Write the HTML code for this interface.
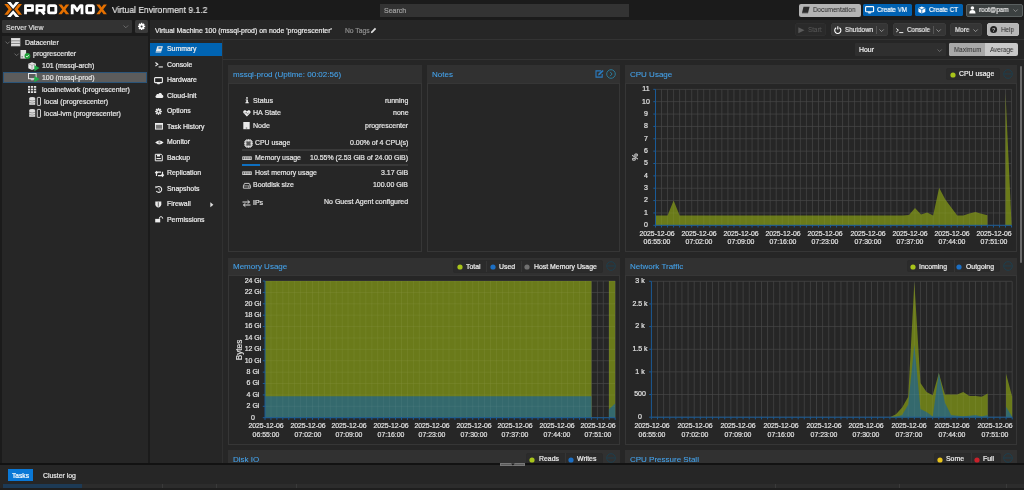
<!DOCTYPE html>
<html><head><meta charset="utf-8"><style>
html,body{margin:0;padding:0;}
body{width:1024px;height:490px;overflow:hidden;position:relative;background:#1b1b1b;font-family:'Liberation Sans', sans-serif;}
.t{position:absolute;white-space:nowrap;line-height:1;-webkit-text-stroke:0.2px currentColor;will-change:transform;}
.r{position:absolute;box-sizing:border-box;}
svg.r{overflow:visible;}
</style></head><body>
<div class="r" style="left:0px;top:0px;width:1024px;height:20px;background:#1b1b1b;"></div>
<div class="r" style="left:2px;top:36px;width:146px;height:427px;background:#262626;"></div>
<div class="r" style="left:2px;top:20px;width:130px;height:13px;background:#333333;border-radius:1px;"></div>
<div class="r" style="left:135px;top:20px;width:13px;height:13px;background:#3a3a3a;border-radius:1.5px;"></div>
<div class="r" style="left:150px;top:20px;width:874px;height:19px;background:#262626;"></div>
<div class="r" style="left:150px;top:39px;width:874px;height:1px;background:#333333;"></div>
<div class="r" style="left:150px;top:40px;width:72px;height:423px;background:#262626;"></div>
<div class="r" style="left:222px;top:40px;width:1px;height:423px;background:#303030;"></div>
<div class="r" style="left:223px;top:40px;width:801px;height:19px;background:#262626;"></div>
<div class="r" style="left:223px;top:59px;width:801px;height:1px;background:#333333;"></div>
<div class="r" style="left:223px;top:60px;width:801px;height:403px;background:#262626;"></div>
<svg class="r" style="left:0px;top:0px;" width="110" height="20" viewBox="0 0 110 20"><polygon points="4.3,3.9 7.8,3.9 12,9.3 7.8,14.7 4.3,14.7 8.5,9.3" fill="#e57000"/><polygon points="22,3.9 18.5,3.9 14.3,9.3 18.5,14.7 22,14.7 17.8,9.3" fill="#e57000"/><polygon points="7,2.0 10.7,2.0 13.15,5.2 15.6,2.0 19.3,2.0 13.15,8.9" fill="#fff"/><polygon points="7,17.1 10.7,17.1 13.15,13.9 15.6,17.1 19.3,17.1 13.15,10.2" fill="#fff"/><path d="M25.5 14.3 V5.55 H32.5 V10.4 H25.5" fill="none" stroke="#fff" stroke-width="2.8" stroke-linejoin="round"/><path d="M36.9 14.3 V5.55 H44.0 V10.4 H36.9 M41.2 10.5 L44.5 14.3" fill="none" stroke="#fff" stroke-width="2.8" stroke-linejoin="round"/><rect x="48.6" y="5.55" width="7.2" height="7.35" rx="1.1" fill="none" stroke="#fff" stroke-width="2.8"/><polygon points="58.4,4.4 61.699999999999996,4.4 69.2,14.2 65.9,14.2" fill="#e57000"/><polygon points="65.9,4.4 69.2,4.4 61.699999999999996,14.2 58.4,14.2" fill="#e57000"/><path d="M72.2 14.3 V5.55 H73.8 L77.1 10.6 L80.4 5.55 H82.0 V14.3" fill="none" stroke="#fff" stroke-width="2.8" stroke-linejoin="round"/><rect x="86.7" y="5.55" width="6.7" height="7.35" rx="1.1" fill="none" stroke="#fff" stroke-width="2.8"/><polygon points="96.3,4.4 99.6,4.4 106.9,14.2 103.60000000000001,14.2" fill="#e57000"/><polygon points="103.60000000000001,4.4 106.9,4.4 99.6,14.2 96.3,14.2" fill="#e57000"/></svg>
<div class="t" style="left:111.60px;top:6px;font-size:9.2px;color:#e4e4e4;font-weight:normal;transform:scaleX(0.925);transform-origin:0 0;">Virtual Environment 9.1.2</div>
<div class="r" style="left:380px;top:4px;width:249px;height:13px;background:#333333;"></div>
<div class="t" style="left:383.70px;top:7px;font-size:7.0px;color:#a0a0a0;font-weight:normal;">Search</div>
<div class="r" style="left:799px;top:3.5px;width:62px;height:13.3px;background:#b4b4b4;border-radius:2px;"></div>
<svg class="r" style="left:801px;top:6px;" width="10" height="8" viewBox="0 0 10 8"><path d="M2.5 0.8 H8.6 L7.2 6.2 H1.1 Z" fill="#2a2a2a"/><path d="M1.1 6.2 H7.2 L7 7.2 H1 Z" fill="#2a2a2a"/></svg>
<div class="t" style="left:812.70px;top:6px;font-size:7.0px;color:#262626;font-weight:normal;transform:scaleX(0.9);transform-origin:0 0;-webkit-text-stroke:0;">Documentation</div>
<div class="r" style="left:863px;top:3.8px;width:48.60000000000002px;height:12.599999999999998px;background:#0062b3;border-radius:1.5px;"></div>
<svg class="r" style="left:865px;top:6px;" width="10" height="8" viewBox="0 0 10 8"><rect x="0.6" y="0.6" width="8" height="5.2" rx="0.8" fill="none" stroke="#fff" stroke-width="1.1"/><path d="M2.5 6.3 H6.7 L5.6 7.4 H3.6 Z" fill="#fff"/></svg>
<div class="t" style="left:876.60px;top:6px;font-size:7.0px;color:#ffffff;font-weight:normal;transform:scaleX(0.9);transform-origin:0 0;">Create VM</div>
<div class="r" style="left:915px;top:3.8px;width:47.60000000000002px;height:12.599999999999998px;background:#0062b3;border-radius:1.5px;"></div>
<svg class="r" style="left:917.5px;top:6.2px;" width="8" height="8" viewBox="0 0 8 8"><path d="M3.8 0.4 L7.3 1.9 V5.9 L3.8 7.5 L0.4 5.9 V1.9 Z" fill="#fff"/><path d="M0.6 2.1 L3.8 3.5 L7.1 2.1 M3.8 3.5 V7.2" fill="none" stroke="#0062b3" stroke-width="0.8"/></svg>
<div class="t" style="left:928.60px;top:6px;font-size:7.0px;color:#ffffff;font-weight:normal;transform:scaleX(0.9);transform-origin:0 0;">Create CT</div>
<div class="r" style="left:965.8px;top:3.5px;width:56.90000000000009px;height:13.3px;background:#3c4141;border:1px solid #5a6060;border-radius:2px;"></div>
<svg class="r" style="left:969px;top:6px;" width="7" height="8" viewBox="0 0 7 8"><circle cx="3.4" cy="2" r="1.8" fill="#fff"/><path d="M0.3 7.6 C0.3 4.6 1.5 4 3.4 4 C5.3 4 6.5 4.6 6.5 7.6 Z" fill="#fff"/></svg>
<div class="t" style="left:978.90px;top:6px;font-size:7.0px;color:#e8e8e8;font-weight:normal;transform:scaleX(0.9);transform-origin:0 0;">root@pam</div>
<svg class="r" style="left:1013px;top:8.5px;" width="6" height="4" viewBox="0 0 6 4"><polyline points="0.5,0.5 2.6,2.6 4.7,0.5" fill="none" stroke="#999" stroke-width="0.8"/></svg>
<div class="t" style="left:5.60px;top:24px;font-size:6.98px;color:#dcdcdc;font-weight:normal;">Server View</div>
<svg class="r" style="left:122.5px;top:25px;" width="6" height="4" viewBox="0 0 6 4"><polyline points="0.5,0.5 2.8,2.8 5.1,0.5" fill="none" stroke="#777" stroke-width="0.8"/></svg>
<svg class="r" style="left:136px;top:21px;" width="11" height="11" viewBox="0 0 11 11"><g transform="translate(5.6,5.4)"><circle r="2.6" fill="#fff"/><rect x="-0.8" y="-3.6" width="1.6" height="1.6" fill="#fff" transform="rotate(0)"/><rect x="-0.8" y="-3.6" width="1.6" height="1.6" fill="#fff" transform="rotate(45)"/><rect x="-0.8" y="-3.6" width="1.6" height="1.6" fill="#fff" transform="rotate(90)"/><rect x="-0.8" y="-3.6" width="1.6" height="1.6" fill="#fff" transform="rotate(135)"/><rect x="-0.8" y="-3.6" width="1.6" height="1.6" fill="#fff" transform="rotate(180)"/><rect x="-0.8" y="-3.6" width="1.6" height="1.6" fill="#fff" transform="rotate(225)"/><rect x="-0.8" y="-3.6" width="1.6" height="1.6" fill="#fff" transform="rotate(270)"/><rect x="-0.8" y="-3.6" width="1.6" height="1.6" fill="#fff" transform="rotate(315)"/><circle r="1.0" fill="#3a3a3a"/></g></svg>
<svg class="r" style="left:4.6px;top:40.6px;" width="6" height="4" viewBox="0 0 6 4"><polyline points="0.5,0.6 2.6,2.7 4.7,0.6" fill="none" stroke="#7a7a7a" stroke-width="0.8"/></svg>
<svg class="r" style="left:10.7px;top:38.4px;" width="9.5" height="8.5" viewBox="0 0 9.5 8.5"><rect x="0" y="0" width="9.3" height="8.3" fill="#cfcfcf"/><rect x="0" y="2.6" width="9.3" height="0.7" fill="#6a6a6a"/><rect x="0" y="5.3" width="9.3" height="0.7" fill="#6a6a6a"/><rect x="1" y="0.9" width="7.3" height="0.6" fill="#f4f4f4"/><rect x="1" y="3.7" width="7.3" height="0.6" fill="#f4f4f4"/><rect x="1" y="6.5" width="7.3" height="0.6" fill="#f4f4f4"/></svg>
<div class="t" style="left:24.90px;top:40px;font-size:6.9px;color:#e6e6e6;font-weight:normal;">Datacenter</div>
<svg class="r" style="left:14.0px;top:52.6px;" width="6" height="4" viewBox="0 0 6 4"><polyline points="0.5,0.6 2.6,2.7 4.7,0.6" fill="none" stroke="#7a7a7a" stroke-width="0.8"/></svg>
<svg class="r" style="left:19.8px;top:50px;" width="11" height="9" viewBox="0 0 11 9"><rect x="0.5" y="0" width="5.6" height="8.6" fill="#e0e0e0"/><rect x="1.5" y="6.4" width="1.4" height="0.9" fill="#555"/><circle cx="7.4" cy="6" r="2.9" fill="#22a03a"/><polyline points="6,6 7.1,7.1 8.9,4.9" fill="none" stroke="#fff" stroke-width="0.8"/></svg>
<div class="t" style="left:32.60px;top:50px;font-size:7.0px;color:#e6e6e6;font-weight:normal;">progrescenter</div>
<svg class="r" style="left:28px;top:61.5px;" width="12" height="9" viewBox="0 0 12 9"><path d="M4 0.3 L8 1.7 V6.3 L4 7.9 L0.3 6.3 V1.7 Z" fill="#e8e8e8"/><path d="M0.5 1.9 L4 3.3 L7.8 1.9 M4 3.3 V7.6" fill="none" stroke="#888" stroke-width="0.6"/><path d="M6.3 3.0 L11.6 6.1 L6.3 9.2 Z" fill="#22b04a"/></svg>
<div class="t" style="left:41.90px;top:63px;font-size:6.97px;color:#e6e6e6;font-weight:normal;">101 (mssql-arch)</div>
<div class="r" style="left:2.6px;top:71.9px;width:144.4px;height:11.5px;background:#5c5c5c;border:1px solid #2b5478;"></div>
<svg class="r" style="left:28px;top:73.4px;" width="12" height="9" viewBox="0 0 12 9"><rect x="0.5" y="0.5" width="7.6" height="5.2" fill="none" stroke="#e8e8e8" stroke-width="1"/><path d="M2.4 6.2 H6.2 L5.4 7.3 H3.2 Z" fill="#e8e8e8"/><path d="M6.3 3.0 L11.6 6.1 L6.3 9.2 Z" fill="#22b04a"/></svg>
<div class="t" style="left:41.90px;top:75px;font-size:6.96px;color:#e6e6e6;font-weight:normal;">100 (mssql-prod)</div>
<svg class="r" style="left:27.8px;top:85.5px;" width="9" height="8" viewBox="0 0 9 8"><rect x="0" y="0" width="2.2" height="1.8" fill="#e0e0e0"/><rect x="0" y="2.6" width="2.2" height="1.8" fill="#e0e0e0"/><rect x="0" y="5.2" width="2.2" height="1.8" fill="#e0e0e0"/><rect x="3" y="0" width="2.2" height="1.8" fill="#e0e0e0"/><rect x="3" y="2.6" width="2.2" height="1.8" fill="#e0e0e0"/><rect x="3" y="5.2" width="2.2" height="1.8" fill="#e0e0e0"/><rect x="6" y="0" width="2.2" height="1.8" fill="#e0e0e0"/><rect x="6" y="2.6" width="2.2" height="1.8" fill="#e0e0e0"/><rect x="6" y="5.2" width="2.2" height="1.8" fill="#e0e0e0"/></svg>
<div class="t" style="left:41.90px;top:87px;font-size:6.94px;color:#e6e6e6;font-weight:normal;">localnetwork (progrescenter)</div>
<svg class="r" style="left:28.5px;top:97.3px;" width="14" height="9" viewBox="0 0 14 9"><ellipse cx="3.2" cy="1.2" rx="3" ry="1.1" fill="#ddd"/><rect x="0.2" y="1.2" width="6" height="6.6" fill="#ddd"/><path d="M0.2 3.3 Q3.2 4.6 6.2 3.3 M0.2 5.5 Q3.2 6.8 6.2 5.5" fill="none" stroke="#666" stroke-width="0.6"/><rect x="8.3" y="0.4" width="3.2" height="8" rx="0.5" fill="none" stroke="#ddd" stroke-width="0.9"/></svg>
<div class="t" style="left:44.00px;top:98px;font-size:7.0px;color:#e6e6e6;font-weight:normal;">local (progrescenter)</div>
<svg class="r" style="left:28.5px;top:109.3px;" width="14" height="9" viewBox="0 0 14 9"><ellipse cx="3.2" cy="1.2" rx="3" ry="1.1" fill="#ddd"/><rect x="0.2" y="1.2" width="6" height="6.6" fill="#ddd"/><path d="M0.2 3.3 Q3.2 4.6 6.2 3.3 M0.2 5.5 Q3.2 6.8 6.2 5.5" fill="none" stroke="#666" stroke-width="0.6"/><rect x="8.3" y="0.4" width="3.2" height="8" rx="0.5" fill="none" stroke="#ddd" stroke-width="0.9"/></svg>
<div class="t" style="left:44.00px;top:111px;font-size:6.96px;color:#e6e6e6;font-weight:normal;">local-lvm (progrescenter)</div>
<div class="t" style="left:154.60px;top:28px;font-size:6.96px;color:#e8e8e8;font-weight:normal;">Virtual Machine 100 (mssql-prod) on node 'progrescenter'</div>
<div class="t" style="left:344.50px;top:28px;font-size:6.74px;color:#8f8f8f;font-weight:normal;">No Tags</div>
<svg class="r" style="left:370px;top:26.5px;" width="7" height="7" viewBox="0 0 7 7"><path d="M0.8 6.2 L1.3 4.4 L4.9 0.8 L6.2 2.1 L2.6 5.7 Z" fill="#ddd"/></svg>
<div class="r" style="left:794.8px;top:23.2px;width:31.200000000000045px;height:13.000000000000004px;background:#2a2a2a;border:1px solid #2e2e2e;border-radius:2px;"></div>
<svg class="r" style="left:797.7px;top:27px;" width="7" height="7" viewBox="0 0 7 7"><path d="M0.3 0.2 L6.5 3.2 L0.3 6.3 Z" fill="#5a5a5a"/></svg>
<div class="t" style="left:808.00px;top:26px;font-size:7.0px;color:#5c5c5c;font-weight:normal;transform:scaleX(0.9);transform-origin:0 0;-webkit-text-stroke:0;">Start</div>
<div class="r" style="left:830.8px;top:23.2px;width:57.200000000000045px;height:13.000000000000004px;background:#353535;border:1px solid #3a3a3a;border-radius:2px;"></div>
<svg class="r" style="left:833.5px;top:25.8px;" width="8" height="8" viewBox="0 0 8 8"><path d="M2.2 1.8 A3.1 3.1 0 1 0 5.4 1.8" fill="none" stroke="#fff" stroke-width="1.1"/><line x1="3.8" y1="0.3" x2="3.8" y2="3.6" stroke="#fff" stroke-width="1.1"/></svg>
<div class="t" style="left:844.60px;top:26px;font-size:7.0px;color:#e8e8e8;font-weight:normal;transform:scaleX(0.9);transform-origin:0 0;">Shutdown</div>
<div class="r" style="left:875.5px;top:25.9px;width:0.7999999999999545px;height:8.100000000000001px;background:#555;"></div>
<svg class="r" style="left:879px;top:29px;" width="6" height="4" viewBox="0 0 6 4"><polyline points="0.5,0.5 2.6,2.6 4.7,0.5" fill="none" stroke="#aaa" stroke-width="0.8"/></svg>
<div class="r" style="left:892.9px;top:23.2px;width:52.700000000000045px;height:13.000000000000004px;background:#353535;border:1px solid #3a3a3a;border-radius:2px;"></div>
<svg class="r" style="left:895.8px;top:27.5px;" width="8" height="6" viewBox="0 0 8 6"><polyline points="0.3,0.5 2.4,2.2 0.3,3.9" fill="none" stroke="#fff" stroke-width="0.9"/><line x1="3.2" y1="4.6" x2="7.3" y2="4.6" stroke="#fff" stroke-width="0.9"/></svg>
<div class="t" style="left:906.80px;top:26px;font-size:7.0px;color:#e8e8e8;font-weight:normal;transform:scaleX(0.9);transform-origin:0 0;">Console</div>
<div class="r" style="left:932.5px;top:25.9px;width:0.7999999999999545px;height:8.100000000000001px;background:#555;"></div>
<svg class="r" style="left:936.4px;top:29px;" width="6" height="4" viewBox="0 0 6 4"><polyline points="0.5,0.5 2.6,2.6 4.7,0.5" fill="none" stroke="#aaa" stroke-width="0.8"/></svg>
<div class="r" style="left:950px;top:23.2px;width:32.299999999999955px;height:13.000000000000004px;background:#353535;border:1px solid #3a3a3a;border-radius:2px;"></div>
<div class="t" style="left:954.80px;top:26px;font-size:7.0px;color:#e8e8e8;font-weight:normal;transform:scaleX(0.9);transform-origin:0 0;">More</div>
<svg class="r" style="left:973.4px;top:29px;" width="6" height="4" viewBox="0 0 6 4"><polyline points="0.5,0.5 2.6,2.6 4.7,0.5" fill="none" stroke="#aaa" stroke-width="0.8"/></svg>
<div class="r" style="left:986.9px;top:23.2px;width:32.0px;height:13.000000000000004px;background:#b7b7b7;border:1px solid #bdbdbd;border-radius:2px;"></div>
<svg class="r" style="left:990px;top:26px;" width="8" height="8" viewBox="0 0 8 8"><circle cx="3.6" cy="3.6" r="3.5" fill="#222"/><text x="3.6" y="5.7" font-size="5.6" font-weight="bold" text-anchor="middle" fill="#b7b7b7" font-family="Liberation Sans">?</text></svg>
<div class="t" style="left:1001.00px;top:26px;font-size:7.0px;color:#2a2a2a;font-weight:normal;transform:scaleX(0.9);transform-origin:0 0;-webkit-text-stroke:0;">Help</div>
<div class="r" style="left:855.3px;top:43px;width:90.70000000000005px;height:13px;background:#2f2f2f;border-radius:1px;"></div>
<div class="t" style="left:858.90px;top:47px;font-size:6.9px;color:#f0f0f0;font-weight:normal;">Hour</div>
<svg class="r" style="left:937px;top:48.5px;" width="6" height="4" viewBox="0 0 6 4"><polyline points="0.5,0.5 2.6,2.6 4.7,0.5" fill="none" stroke="#777" stroke-width="0.8"/></svg>
<div class="r" style="left:948.7px;top:43px;width:69.29999999999995px;height:13px;background:#c9c9c9;border-radius:2px;"></div>
<div class="r" style="left:948.7px;top:43px;width:36.299999999999955px;height:13px;background:#a8a8a8;border-radius:2px 0 0 2px;"></div>
<div class="t" style="left:953.60px;top:46px;font-size:7.0px;color:#2a2a2a;font-weight:normal;transform:scaleX(0.9);transform-origin:0 0;-webkit-text-stroke:0;">Maximum</div>
<div class="t" style="left:990.00px;top:46px;font-size:7.0px;color:#2a2a2a;font-weight:normal;transform:scaleX(0.9);transform-origin:0 0;-webkit-text-stroke:0;">Average</div>
<div class="r" style="left:150px;top:42.8px;width:72px;height:12.800000000000004px;background:#0063b1;"></div>
<div class="t" style="left:166.90px;top:46px;font-size:6.9px;color:#eeeeee;font-weight:normal;">Summary</div>
<div class="t" style="left:166.90px;top:62px;font-size:6.9px;color:#eeeeee;font-weight:normal;">Console</div>
<div class="t" style="left:166.90px;top:77px;font-size:6.9px;color:#eeeeee;font-weight:normal;">Hardware</div>
<div class="t" style="left:166.90px;top:93px;font-size:6.9px;color:#eeeeee;font-weight:normal;">Cloud-Init</div>
<div class="t" style="left:166.90px;top:108px;font-size:6.9px;color:#eeeeee;font-weight:normal;">Options</div>
<div class="t" style="left:166.90px;top:124px;font-size:6.9px;color:#eeeeee;font-weight:normal;">Task History</div>
<div class="t" style="left:166.90px;top:139px;font-size:6.9px;color:#eeeeee;font-weight:normal;">Monitor</div>
<div class="t" style="left:166.90px;top:155px;font-size:6.9px;color:#eeeeee;font-weight:normal;">Backup</div>
<div class="t" style="left:166.90px;top:170px;font-size:6.9px;color:#eeeeee;font-weight:normal;">Replication</div>
<div class="t" style="left:166.90px;top:186px;font-size:6.9px;color:#eeeeee;font-weight:normal;">Snapshots</div>
<div class="t" style="left:166.90px;top:201px;font-size:6.9px;color:#eeeeee;font-weight:normal;">Firewall</div>
<div class="t" style="left:166.90px;top:217px;font-size:6.9px;color:#eeeeee;font-weight:normal;">Permissions</div>
<svg class="r" style="left:154.8px;top:45.8px;" width="9" height="7" viewBox="0 0 9 7"><path d="M2.3 0.3 H7.9 L6.4 5.2 H0.8 Z" fill="#ececec"/><path d="M0.8 5.4 H6.3 L6.1 6.5 H0.5 Z" fill="#ececec"/><rect x="3.4" y="1.4" width="3" height="1.2" fill="#0063b1"/></svg>
<svg class="r" style="left:154.8px;top:62.3px;" width="9" height="6" viewBox="0 0 9 6"><polyline points="0.4,0.5 2.8,2.3 0.4,4.1" fill="none" stroke="#ececec" stroke-width="1.1"/><rect x="3.6" y="4.4" width="4.3" height="1.1" fill="#ececec"/></svg>
<svg class="r" style="left:154.3px;top:76.5px;" width="9" height="8" viewBox="0 0 9 8"><rect x="0.6" y="0.6" width="7.8" height="5" rx="0.6" fill="none" stroke="#ececec" stroke-width="1.1"/><path d="M2.6 6.1 H6.4 L5.4 7.2 H3.6 Z" fill="#ececec"/></svg>
<svg class="r" style="left:154.5px;top:91.8px;" width="9" height="6" viewBox="0 0 9 6"><path d="M1.6 5.9 C0.2 5.9 0 4.1 1.2 3.6 C1.1 2.2 2.6 1.6 3.4 2.2 C4 0.4 6.9 0.5 7 2.7 C8.6 2.8 8.9 5.9 7.2 5.9 Z" fill="#ececec"/></svg>
<svg class="r" style="left:155.1px;top:107.6px;" width="7" height="7" viewBox="0 0 7 7"><g transform="translate(3.5,3.5)"><circle r="2.4" fill="#ececec"/><rect x="-0.7" y="-3.4" width="1.4" height="1.4" fill="#ececec" transform="rotate(0)"/><rect x="-0.7" y="-3.4" width="1.4" height="1.4" fill="#ececec" transform="rotate(45)"/><rect x="-0.7" y="-3.4" width="1.4" height="1.4" fill="#ececec" transform="rotate(90)"/><rect x="-0.7" y="-3.4" width="1.4" height="1.4" fill="#ececec" transform="rotate(135)"/><rect x="-0.7" y="-3.4" width="1.4" height="1.4" fill="#ececec" transform="rotate(180)"/><rect x="-0.7" y="-3.4" width="1.4" height="1.4" fill="#ececec" transform="rotate(225)"/><rect x="-0.7" y="-3.4" width="1.4" height="1.4" fill="#ececec" transform="rotate(270)"/><rect x="-0.7" y="-3.4" width="1.4" height="1.4" fill="#ececec" transform="rotate(315)"/><circle r="0.9" fill="#262626"/></g></svg>
<svg class="r" style="left:154.8px;top:123px;" width="8" height="7" viewBox="0 0 8 7"><rect x="0" y="0" width="8" height="6.6" fill="#ececec"/><rect x="0.9" y="1.8" width="6.2" height="3.9" fill="#777"/></svg>
<svg class="r" style="left:154.5px;top:140.2px;" width="9" height="5" viewBox="0 0 9 5"><path d="M0.2 2.5 Q4.4 -1.6 8.6 2.5 Q4.4 6.6 0.2 2.5 Z" fill="#ececec"/><circle cx="4.4" cy="2.4" r="1.1" fill="#888"/></svg>
<svg class="r" style="left:154.8px;top:154px;" width="8" height="7" viewBox="0 0 8 7"><path d="M0.3 0.3 H6.2 L7.3 1.4 V6.8 H0.3 Z" fill="none" stroke="#ececec" stroke-width="1"/><rect x="2" y="0.5" width="3" height="2" fill="#ececec"/><rect x="1.5" y="4" width="4.4" height="1.1" fill="#ececec"/></svg>
<svg class="r" style="left:154.5px;top:170.8px;" width="9" height="6" viewBox="0 0 9 6"><path d="M1.5 5 V1.2 H6 M0.2 2.2 L1.5 0.6 L2.8 2.2" fill="none" stroke="#ececec" stroke-width="1.2"/><path d="M7.5 0.8 V4.6 H3 M6.2 3.6 L7.5 5.2 L8.8 3.6" fill="none" stroke="#ececec" stroke-width="1.2"/></svg>
<svg class="r" style="left:155.1px;top:185.5px;" width="8" height="7" viewBox="0 0 8 7"><path d="M1.6 1.5 A2.9 2.9 0 1 1 1.3 5" fill="none" stroke="#ececec" stroke-width="1.1"/><path d="M0.2 0.3 L2.6 0.6 L0.6 2.6 Z" fill="#ececec"/><polyline points="3.9,2 3.9,3.6 5,4.4" fill="none" stroke="#ececec" stroke-width="0.8"/></svg>
<svg class="r" style="left:155.4px;top:201px;" width="7" height="7" viewBox="0 0 7 7"><path d="M0.3 0.4 H6.3 V3.3 C6.3 5.2 4.6 6.2 3.3 6.6 C2 6.2 0.3 5.2 0.3 3.3 Z" fill="#ececec"/><path d="M3.3 1.2 V5.6" stroke="#555" stroke-width="0.9"/></svg>
<svg class="r" style="left:210.2px;top:201.5px;" width="4" height="6" viewBox="0 0 4 6"><path d="M0.3 0.2 L3.4 2.7 L0.3 5.2 Z" fill="#dddddd"/></svg>
<svg class="r" style="left:154.7px;top:216.3px;" width="8" height="7" viewBox="0 0 8 7"><rect x="0.2" y="2.9" width="5" height="3.5" fill="#ececec"/><path d="M4.4 2.9 V2.2 A1.6 1.6 0 0 1 7.6 2.2 V2.8" fill="none" stroke="#ececec" stroke-width="0.9"/></svg>
<div class="r" style="left:228px;top:65px;width:194px;height:19.299999999999997px;background:#313131;"></div>
<div class="r" style="left:228px;top:83.3px;width:194px;height:168.7px;background:transparent;border:1px solid #363636;"></div>
<div class="t" style="left:233.00px;top:71px;font-size:8.0px;color:#45a2ea;font-weight:normal;-webkit-text-stroke:0.08px currentColor;">mssql-prod (Uptime: 00:02:56)</div>
<div class="r" style="left:427px;top:65px;width:193px;height:19.299999999999997px;background:#313131;"></div>
<div class="r" style="left:427px;top:83.3px;width:193px;height:168.7px;background:transparent;border:1px solid #363636;"></div>
<div class="t" style="left:432.00px;top:71px;font-size:8.0px;color:#45a2ea;font-weight:normal;-webkit-text-stroke:0.08px currentColor;">Notes</div>
<div class="r" style="left:625px;top:65px;width:392px;height:18.5px;background:#313131;"></div>
<div class="r" style="left:625px;top:82.5px;width:392px;height:169.5px;background:transparent;border:1px solid #363636;"></div>
<div class="t" style="left:630.00px;top:71px;font-size:8.0px;color:#45a2ea;font-weight:normal;-webkit-text-stroke:0.08px currentColor;">CPU Usage</div>
<div class="r" style="left:228px;top:258px;width:392px;height:18px;background:#313131;"></div>
<div class="r" style="left:228px;top:275px;width:392px;height:170px;background:transparent;border:1px solid #363636;"></div>
<div class="t" style="left:233.00px;top:263px;font-size:8.0px;color:#45a2ea;font-weight:normal;-webkit-text-stroke:0.08px currentColor;">Memory Usage</div>
<div class="r" style="left:625px;top:258px;width:392px;height:18px;background:#313131;"></div>
<div class="r" style="left:625px;top:275px;width:392px;height:170px;background:transparent;border:1px solid #363636;"></div>
<div class="t" style="left:630.00px;top:263px;font-size:8.0px;color:#45a2ea;font-weight:normal;-webkit-text-stroke:0.08px currentColor;">Network Traffic</div>
<div class="r" style="left:228px;top:450px;width:392px;height:18px;background:#313131;"></div>
<div class="r" style="left:228px;top:467px;width:392px;height:13px;background:transparent;border:1px solid #363636;"></div>
<div class="t" style="left:233.00px;top:456px;font-size:8.0px;color:#45a2ea;font-weight:normal;-webkit-text-stroke:0.08px currentColor;">Disk IO</div>
<div class="r" style="left:625px;top:450px;width:392px;height:18px;background:#313131;"></div>
<div class="r" style="left:625px;top:467px;width:392px;height:13px;background:transparent;border:1px solid #363636;"></div>
<div class="t" style="left:630.00px;top:456px;font-size:8.0px;color:#45a2ea;font-weight:normal;-webkit-text-stroke:0.08px currentColor;">CPU Pressure Stall</div>
<svg class="r" style="left:594.5px;top:70px;" width="9" height="8" viewBox="0 0 9 8"><path d="M6.2 0.9 H1 V7.1 H7.2 V4" fill="none" stroke="#2a7bc0" stroke-width="1.1"/><path d="M3 5.4 L3.5 3.6 L7.6 0 L8.7 1.1 L4.7 5 Z" fill="#2a7bc0"/></svg>
<svg class="r" style="left:605.7px;top:69.2px;" width="10" height="10" viewBox="0 0 10 10"><circle cx="5" cy="5" r="4.3" fill="none" stroke="#2a7a9a" stroke-width="1"/><polyline points="4,2.8 6.1,5 4,7.2" fill="none" stroke="#2a7a9a" stroke-width="1"/></svg>
<div class="r" style="left:945.5px;top:67.5px;width:54.0px;height:12.700000000000003px;background:#2b2b2b;border:1px solid #2a2a2a;border-radius:2px;"></div>
<svg class="r" style="left:949.5px;top:71.85px;" width="6" height="6" viewBox="0 0 6 6"><circle cx="3" cy="3" r="2.6" fill="#a8c41a"/></svg>
<div class="t" style="left:958.50px;top:71px;font-size:6.9px;color:#eeeeee;font-weight:normal;">CPU usage</div>
<svg class="r" style="left:1002.9px;top:68.6px;" width="10" height="10" viewBox="0 0 10 10"><circle cx="5" cy="5" r="4.3" fill="none" stroke="#1b3f50" stroke-width="0.9"/><line x1="1.2" y1="5" x2="8.8" y2="5" stroke="#1b3f50" stroke-width="0.9"/></svg>
<div class="r" style="left:452.5px;top:260.2px;width:150.29999999999995px;height:12.400000000000034px;background:#2b2b2b;border:1px solid #2a2a2a;border-radius:2px;"></div>
<div class="r" style="left:486.2px;top:260.7px;width:1.0px;height:11.400000000000034px;background:#353535;"></div>
<div class="r" style="left:520.6px;top:260.7px;width:1.0px;height:11.400000000000034px;background:#353535;"></div>
<svg class="r" style="left:456.6px;top:264.4px;" width="6" height="6" viewBox="0 0 6 6"><circle cx="3" cy="3" r="2.6" fill="#a8c41a"/></svg>
<div class="t" style="left:466.10px;top:264px;font-size:6.9px;color:#eeeeee;font-weight:normal;">Total</div>
<svg class="r" style="left:489.9px;top:264.4px;" width="6" height="6" viewBox="0 0 6 6"><circle cx="3" cy="3" r="2.6" fill="#1c6fc4"/></svg>
<div class="t" style="left:499.00px;top:264px;font-size:6.9px;color:#eeeeee;font-weight:normal;">Used</div>
<svg class="r" style="left:524.2px;top:264.4px;" width="6" height="6" viewBox="0 0 6 6"><circle cx="3" cy="3" r="2.6" fill="#707070"/></svg>
<div class="t" style="left:533.90px;top:264px;font-size:6.9px;color:#eeeeee;font-weight:normal;">Host Memory Usage</div>
<svg class="r" style="left:605.8px;top:261.3px;" width="10" height="10" viewBox="0 0 10 10"><circle cx="5" cy="5" r="4.3" fill="none" stroke="#1b3f50" stroke-width="0.9"/><line x1="1.2" y1="5" x2="8.8" y2="5" stroke="#1b3f50" stroke-width="0.9"/></svg>
<div class="r" style="left:906.7px;top:259.8px;width:92.89999999999998px;height:12.599999999999966px;background:#2b2b2b;border:1px solid #2a2a2a;border-radius:2px;"></div>
<div class="r" style="left:953.7px;top:260.3px;width:1.0px;height:11.599999999999966px;background:#353535;"></div>
<svg class="r" style="left:909.9px;top:264.1px;" width="6" height="6" viewBox="0 0 6 6"><circle cx="3" cy="3" r="2.6" fill="#a8c41a"/></svg>
<div class="t" style="left:919.00px;top:264px;font-size:6.9px;color:#eeeeee;font-weight:normal;">Incoming</div>
<svg class="r" style="left:956.4px;top:264.1px;" width="6" height="6" viewBox="0 0 6 6"><circle cx="3" cy="3" r="2.6" fill="#1c6fc4"/></svg>
<div class="t" style="left:965.90px;top:264px;font-size:6.9px;color:#eeeeee;font-weight:normal;">Outgoing</div>
<svg class="r" style="left:1002.8px;top:261.3px;" width="10" height="10" viewBox="0 0 10 10"><circle cx="5" cy="5" r="4.3" fill="none" stroke="#1b3f50" stroke-width="0.9"/><line x1="1.2" y1="5" x2="8.8" y2="5" stroke="#1b3f50" stroke-width="0.9"/></svg>
<div class="r" style="left:526px;top:452.5px;width:77px;height:12.5px;background:#2b2b2b;border:1px solid #2a2a2a;border-radius:2px;"></div>
<div class="r" style="left:564.5px;top:453.0px;width:1.0px;height:11.5px;background:#353535;"></div>
<svg class="r" style="left:529px;top:456.75px;" width="6" height="6" viewBox="0 0 6 6"><circle cx="3" cy="3" r="2.6" fill="#a8c41a"/></svg>
<div class="t" style="left:538.50px;top:456px;font-size:6.9px;color:#eeeeee;font-weight:normal;">Reads</div>
<svg class="r" style="left:568px;top:456.75px;" width="6" height="6" viewBox="0 0 6 6"><circle cx="3" cy="3" r="2.6" fill="#1c6fc4"/></svg>
<div class="t" style="left:577.00px;top:456px;font-size:6.9px;color:#eeeeee;font-weight:normal;">Writes</div>
<svg class="r" style="left:605.8px;top:453.1px;" width="10" height="10" viewBox="0 0 10 10"><circle cx="5" cy="5" r="4.3" fill="none" stroke="#1b3f50" stroke-width="0.9"/><line x1="1.2" y1="5" x2="8.8" y2="5" stroke="#1b3f50" stroke-width="0.9"/></svg>
<div class="r" style="left:933.5px;top:452.5px;width:67.0px;height:12.5px;background:#2b2b2b;border:1px solid #2a2a2a;border-radius:2px;"></div>
<div class="r" style="left:970.5px;top:453.0px;width:1.0px;height:11.5px;background:#353535;"></div>
<svg class="r" style="left:937px;top:456.75px;" width="6" height="6" viewBox="0 0 6 6"><circle cx="3" cy="3" r="2.6" fill="#e8c31a"/></svg>
<div class="t" style="left:946.00px;top:456px;font-size:6.9px;color:#eeeeee;font-weight:normal;">Some</div>
<svg class="r" style="left:973.8px;top:456.75px;" width="6" height="6" viewBox="0 0 6 6"><circle cx="3" cy="3" r="2.6" fill="#c8202a"/></svg>
<div class="t" style="left:983.00px;top:456px;font-size:6.9px;color:#eeeeee;font-weight:normal;">Full</div>
<svg class="r" style="left:1003px;top:453.1px;" width="10" height="10" viewBox="0 0 10 10"><circle cx="5" cy="5" r="4.3" fill="none" stroke="#1b3f50" stroke-width="0.9"/><line x1="1.2" y1="5" x2="8.8" y2="5" stroke="#1b3f50" stroke-width="0.9"/></svg>
<div class="r" style="left:1019.8px;top:66px;width:2.2000000000000455px;height:196.5px;background:#6a6a6a;border-radius:1px;"></div>
<div class="t" style="left:252.80px;top:98px;font-size:7.1px;color:#e6e6e6;font-weight:normal;">Status</div>
<div class="t" style="right:615.90px;top:97px;font-size:7.0px;color:#e6e6e6;font-weight:normal;">running</div>
<div class="t" style="left:252.80px;top:110px;font-size:7.1px;color:#e6e6e6;font-weight:normal;">HA State</div>
<div class="t" style="right:615.90px;top:109px;font-size:7.0px;color:#e6e6e6;font-weight:normal;">none</div>
<div class="t" style="left:252.80px;top:123px;font-size:7.1px;color:#e6e6e6;font-weight:normal;">Node</div>
<div class="t" style="right:615.90px;top:122px;font-size:7.0px;color:#e6e6e6;font-weight:normal;">progrescenter</div>
<div class="t" style="left:254.90px;top:140px;font-size:6.9px;color:#e6e6e6;font-weight:normal;">CPU usage</div>
<div class="t" style="right:615.90px;top:139px;font-size:7.0px;color:#e6e6e6;font-weight:normal;">0.00% of 4 CPU(s)</div>
<div class="r" style="left:242px;top:149.4px;width:166px;height:2.0px;background:#393939;"></div>
<div class="t" style="left:254.90px;top:155px;font-size:6.96px;color:#e6e6e6;font-weight:normal;">Memory usage</div>
<div class="t" style="right:615.90px;top:155px;font-size:6.97px;color:#e6e6e6;font-weight:normal;">10.55% (2.53 GiB of 24.00 GiB)</div>
<div class="r" style="left:242px;top:163.8px;width:166px;height:1.799999999999983px;background:#393939;"></div>
<div class="r" style="left:242px;top:163.8px;width:17.80000000000001px;height:1.799999999999983px;background:#0e6fc0;"></div>
<div class="t" style="left:254.90px;top:170px;font-size:6.93px;color:#e6e6e6;font-weight:normal;">Host memory usage</div>
<div class="t" style="right:615.90px;top:169px;font-size:7.0px;color:#e6e6e6;font-weight:normal;">3.17 GiB</div>
<div class="t" style="left:253.10px;top:182px;font-size:6.96px;color:#e6e6e6;font-weight:normal;">Bootdisk size</div>
<div class="t" style="right:615.90px;top:182px;font-size:6.96px;color:#e6e6e6;font-weight:normal;">100.00 GiB</div>
<div class="t" style="left:252.80px;top:199px;font-size:7.0px;color:#e6e6e6;font-weight:normal;">IPs</div>
<div class="t" style="right:615.90px;top:198px;font-size:7.0px;color:#e6e6e6;font-weight:normal;">No Guest Agent configured</div>
<svg class="r" style="left:244.5px;top:97.2px;" width="5" height="7" viewBox="0 0 5 7"><circle cx="2" cy="0.9" r="0.9" fill="#eee"/><path d="M0.6 2.4 H2.9 V5.3 H3.8 V6.2 H0.4 V5.3 H1.3 V3.3 H0.6 Z" fill="#eee"/></svg>
<svg class="r" style="left:242.8px;top:110px;" width="8" height="7" viewBox="0 0 8 7"><path d="M3.9 6.4 L0.5 3.1 C-0.3 2 0.4 0.3 1.9 0.3 C2.8 0.3 3.5 0.9 3.9 1.5 C4.3 0.9 5 0.3 5.9 0.3 C7.4 0.3 8.1 2 7.3 3.1 Z" fill="#eee"/><polyline points="1.3,3 2.7,3 3.3,2 4.3,4.3 5,3 6.4,3" fill="none" stroke="#555" stroke-width="0.5"/></svg>
<svg class="r" style="left:243px;top:121.8px;" width="7" height="8" viewBox="0 0 7 8"><rect x="0.3" y="0" width="6.4" height="7.2" fill="#e8e8e8"/><rect x="2.8" y="5.6" width="1.4" height="0.9" fill="#555"/></svg>
<svg class="r" style="left:243.5px;top:139px;" width="9" height="9" viewBox="0 0 9 9"><rect x="1.3" y="1.3" width="6.4" height="6.4" rx="0.8" fill="none" stroke="#e8e8e8" stroke-width="1"/><rect x="2.8" y="2.8" width="3.4" height="3.4" fill="#888"/><rect x="2.6" y="0" width="0.7" height="9" fill="#e8e8e8"/><rect x="4.15" y="0" width="0.7" height="9" fill="#e8e8e8"/><rect x="5.7" y="0" width="0.7" height="9" fill="#e8e8e8"/><rect x="0" y="2.6" width="9" height="0.7" fill="#e8e8e8"/><rect x="0" y="4.15" width="9" height="0.7" fill="#e8e8e8"/><rect x="0" y="5.7" width="9" height="0.7" fill="#e8e8e8"/><rect x="2.6" y="2.6" width="3.8" height="3.8" fill="#555"/></svg>
<svg class="r" style="left:242.2px;top:155.5px;" width="10" height="5" viewBox="0 0 10 5"><rect x="0.3" y="0.4" width="9.4" height="3.6" fill="#ddd"/><rect x="1.1" y="1.2" width="1.2" height="2" fill="#555"/><rect x="3.25" y="1.2" width="1.2" height="2" fill="#555"/><rect x="5.4" y="1.2" width="1.2" height="2" fill="#555"/><rect x="7.549999999999999" y="1.2" width="1.2" height="2" fill="#555"/></svg>
<svg class="r" style="left:242.2px;top:170.5px;" width="10" height="5" viewBox="0 0 10 5"><rect x="0.3" y="0.4" width="9.4" height="3.6" fill="#ddd"/><rect x="1.1" y="1.2" width="1.2" height="2" fill="#555"/><rect x="3.25" y="1.2" width="1.2" height="2" fill="#555"/><rect x="5.4" y="1.2" width="1.2" height="2" fill="#555"/><rect x="7.549999999999999" y="1.2" width="1.2" height="2" fill="#555"/></svg>
<svg class="r" style="left:243.2px;top:182.6px;" width="8" height="6" viewBox="0 0 8 6"><path d="M1.6 0.4 H6.2 L7.4 2.8 V5.2 H0.4 V2.8 Z" fill="none" stroke="#ddd" stroke-width="0.85"/><line x1="0.6" y1="2.9" x2="7.2" y2="2.9" stroke="#ddd" stroke-width="0.7"/><rect x="5" y="3.6" width="1.2" height="0.8" fill="#ddd"/></svg>
<svg class="r" style="left:241.8px;top:199.5px;" width="9" height="7" viewBox="0 0 9 7"><path d="M0.5 2 H7.5 M5.6 0.3 L7.6 2 L5.6 3.6" fill="none" stroke="#ddd" stroke-width="1"/><path d="M8.5 5 H1.5 M3.4 3.3 L1.4 5 L3.4 6.7" fill="none" stroke="#ddd" stroke-width="1"/></svg>
<svg class="r" style="left:0;top:0" width="1024" height="490"><line x1="655.5" y1="225.30" x2="1011.57" y2="225.30" stroke="#373737" stroke-width="1"/><line x1="655.5" y1="212.94" x2="1011.57" y2="212.94" stroke="#373737" stroke-width="1"/><line x1="655.5" y1="200.58" x2="1011.57" y2="200.58" stroke="#373737" stroke-width="1"/><line x1="655.5" y1="188.22" x2="1011.57" y2="188.22" stroke="#373737" stroke-width="1"/><line x1="655.5" y1="175.86" x2="1011.57" y2="175.86" stroke="#373737" stroke-width="1"/><line x1="655.5" y1="163.50" x2="1011.57" y2="163.50" stroke="#373737" stroke-width="1"/><line x1="655.5" y1="151.14" x2="1011.57" y2="151.14" stroke="#373737" stroke-width="1"/><line x1="655.5" y1="138.78" x2="1011.57" y2="138.78" stroke="#373737" stroke-width="1"/><line x1="655.5" y1="126.42" x2="1011.57" y2="126.42" stroke="#373737" stroke-width="1"/><line x1="655.5" y1="114.06" x2="1011.57" y2="114.06" stroke="#373737" stroke-width="1"/><line x1="655.5" y1="101.70" x2="1011.57" y2="101.70" stroke="#373737" stroke-width="1"/><line x1="655.5" y1="89.34" x2="1011.57" y2="89.34" stroke="#373737" stroke-width="1"/><line x1="661.53" y1="89.34" x2="661.53" y2="225.30" stroke="#373737" stroke-width="1"/><line x1="667.57" y1="89.34" x2="667.57" y2="225.30" stroke="#373737" stroke-width="1"/><line x1="673.61" y1="89.34" x2="673.61" y2="225.30" stroke="#373737" stroke-width="1"/><line x1="679.64" y1="89.34" x2="679.64" y2="225.30" stroke="#373737" stroke-width="1"/><line x1="685.67" y1="89.34" x2="685.67" y2="225.30" stroke="#373737" stroke-width="1"/><line x1="691.71" y1="89.34" x2="691.71" y2="225.30" stroke="#373737" stroke-width="1"/><line x1="697.75" y1="89.34" x2="697.75" y2="225.30" stroke="#373737" stroke-width="1"/><line x1="703.78" y1="89.34" x2="703.78" y2="225.30" stroke="#373737" stroke-width="1"/><line x1="709.82" y1="89.34" x2="709.82" y2="225.30" stroke="#373737" stroke-width="1"/><line x1="715.85" y1="89.34" x2="715.85" y2="225.30" stroke="#373737" stroke-width="1"/><line x1="721.88" y1="89.34" x2="721.88" y2="225.30" stroke="#373737" stroke-width="1"/><line x1="727.92" y1="89.34" x2="727.92" y2="225.30" stroke="#373737" stroke-width="1"/><line x1="733.96" y1="89.34" x2="733.96" y2="225.30" stroke="#373737" stroke-width="1"/><line x1="739.99" y1="89.34" x2="739.99" y2="225.30" stroke="#373737" stroke-width="1"/><line x1="746.02" y1="89.34" x2="746.02" y2="225.30" stroke="#373737" stroke-width="1"/><line x1="752.06" y1="89.34" x2="752.06" y2="225.30" stroke="#373737" stroke-width="1"/><line x1="758.10" y1="89.34" x2="758.10" y2="225.30" stroke="#373737" stroke-width="1"/><line x1="764.13" y1="89.34" x2="764.13" y2="225.30" stroke="#373737" stroke-width="1"/><line x1="770.16" y1="89.34" x2="770.16" y2="225.30" stroke="#373737" stroke-width="1"/><line x1="776.20" y1="89.34" x2="776.20" y2="225.30" stroke="#373737" stroke-width="1"/><line x1="782.24" y1="89.34" x2="782.24" y2="225.30" stroke="#373737" stroke-width="1"/><line x1="788.27" y1="89.34" x2="788.27" y2="225.30" stroke="#373737" stroke-width="1"/><line x1="794.31" y1="89.34" x2="794.31" y2="225.30" stroke="#373737" stroke-width="1"/><line x1="800.34" y1="89.34" x2="800.34" y2="225.30" stroke="#373737" stroke-width="1"/><line x1="806.38" y1="89.34" x2="806.38" y2="225.30" stroke="#373737" stroke-width="1"/><line x1="812.41" y1="89.34" x2="812.41" y2="225.30" stroke="#373737" stroke-width="1"/><line x1="818.44" y1="89.34" x2="818.44" y2="225.30" stroke="#373737" stroke-width="1"/><line x1="824.48" y1="89.34" x2="824.48" y2="225.30" stroke="#373737" stroke-width="1"/><line x1="830.51" y1="89.34" x2="830.51" y2="225.30" stroke="#373737" stroke-width="1"/><line x1="836.55" y1="89.34" x2="836.55" y2="225.30" stroke="#373737" stroke-width="1"/><line x1="842.59" y1="89.34" x2="842.59" y2="225.30" stroke="#373737" stroke-width="1"/><line x1="848.62" y1="89.34" x2="848.62" y2="225.30" stroke="#373737" stroke-width="1"/><line x1="854.65" y1="89.34" x2="854.65" y2="225.30" stroke="#373737" stroke-width="1"/><line x1="860.69" y1="89.34" x2="860.69" y2="225.30" stroke="#373737" stroke-width="1"/><line x1="866.73" y1="89.34" x2="866.73" y2="225.30" stroke="#373737" stroke-width="1"/><line x1="872.76" y1="89.34" x2="872.76" y2="225.30" stroke="#373737" stroke-width="1"/><line x1="878.80" y1="89.34" x2="878.80" y2="225.30" stroke="#373737" stroke-width="1"/><line x1="884.83" y1="89.34" x2="884.83" y2="225.30" stroke="#373737" stroke-width="1"/><line x1="890.87" y1="89.34" x2="890.87" y2="225.30" stroke="#373737" stroke-width="1"/><line x1="896.90" y1="89.34" x2="896.90" y2="225.30" stroke="#373737" stroke-width="1"/><line x1="902.93" y1="89.34" x2="902.93" y2="225.30" stroke="#373737" stroke-width="1"/><line x1="908.97" y1="89.34" x2="908.97" y2="225.30" stroke="#373737" stroke-width="1"/><line x1="915.00" y1="89.34" x2="915.00" y2="225.30" stroke="#373737" stroke-width="1"/><line x1="921.04" y1="89.34" x2="921.04" y2="225.30" stroke="#373737" stroke-width="1"/><line x1="927.08" y1="89.34" x2="927.08" y2="225.30" stroke="#373737" stroke-width="1"/><line x1="933.11" y1="89.34" x2="933.11" y2="225.30" stroke="#373737" stroke-width="1"/><line x1="939.14" y1="89.34" x2="939.14" y2="225.30" stroke="#373737" stroke-width="1"/><line x1="945.18" y1="89.34" x2="945.18" y2="225.30" stroke="#373737" stroke-width="1"/><line x1="951.22" y1="89.34" x2="951.22" y2="225.30" stroke="#373737" stroke-width="1"/><line x1="957.25" y1="89.34" x2="957.25" y2="225.30" stroke="#373737" stroke-width="1"/><line x1="963.29" y1="89.34" x2="963.29" y2="225.30" stroke="#373737" stroke-width="1"/><line x1="969.32" y1="89.34" x2="969.32" y2="225.30" stroke="#373737" stroke-width="1"/><line x1="975.36" y1="89.34" x2="975.36" y2="225.30" stroke="#373737" stroke-width="1"/><line x1="981.39" y1="89.34" x2="981.39" y2="225.30" stroke="#373737" stroke-width="1"/><line x1="987.42" y1="89.34" x2="987.42" y2="225.30" stroke="#373737" stroke-width="1"/><line x1="993.46" y1="89.34" x2="993.46" y2="225.30" stroke="#373737" stroke-width="1"/><line x1="999.50" y1="89.34" x2="999.50" y2="225.30" stroke="#373737" stroke-width="1"/><line x1="1005.53" y1="89.34" x2="1005.53" y2="225.30" stroke="#373737" stroke-width="1"/><line x1="1011.57" y1="89.34" x2="1011.57" y2="225.30" stroke="#373737" stroke-width="1"/><polygon points="655.50,225.30 655.50,215.54 661.53,215.54 667.57,215.54 673.61,200.58 679.64,215.54 685.67,215.54 691.71,215.54 697.75,215.54 703.78,215.54 709.82,215.54 715.85,215.54 721.88,215.54 727.92,215.54 733.96,215.54 739.99,215.54 746.02,215.54 752.06,215.54 758.10,215.54 764.13,215.54 770.16,215.54 776.20,215.54 782.24,215.54 788.27,215.54 794.31,215.54 800.34,215.54 806.38,215.54 812.41,215.54 818.44,215.54 824.48,215.54 830.51,215.54 836.55,215.54 842.59,215.54 848.62,215.54 854.65,215.54 860.69,215.54 866.73,215.54 872.76,215.54 878.80,215.54 884.83,215.54 890.87,215.54 896.90,215.54 902.93,215.54 908.97,215.04 915.00,208.12 921.04,214.55 927.08,212.45 933.11,215.54 939.14,187.73 945.18,199.34 951.22,207.38 957.25,215.41 963.29,215.41 969.32,213.56 975.36,212.07 981.39,213.81 987.42,215.16 987.42,225.30" fill="#778919" fill-opacity="0.85"/><polygon points="1005.53,225.3 1005.53,93.05 1011.57,225.3" fill="#778919" fill-opacity="0.85"/><line x1="655.5" y1="225.30" x2="1011.57" y2="225.30" stroke="#fff" stroke-opacity="0.04" stroke-width="1"/><line x1="655.5" y1="212.94" x2="1011.57" y2="212.94" stroke="#fff" stroke-opacity="0.04" stroke-width="1"/><line x1="655.5" y1="200.58" x2="1011.57" y2="200.58" stroke="#fff" stroke-opacity="0.04" stroke-width="1"/><line x1="655.5" y1="188.22" x2="1011.57" y2="188.22" stroke="#fff" stroke-opacity="0.04" stroke-width="1"/><line x1="655.5" y1="175.86" x2="1011.57" y2="175.86" stroke="#fff" stroke-opacity="0.04" stroke-width="1"/><line x1="655.5" y1="163.50" x2="1011.57" y2="163.50" stroke="#fff" stroke-opacity="0.04" stroke-width="1"/><line x1="655.5" y1="151.14" x2="1011.57" y2="151.14" stroke="#fff" stroke-opacity="0.04" stroke-width="1"/><line x1="655.5" y1="138.78" x2="1011.57" y2="138.78" stroke="#fff" stroke-opacity="0.04" stroke-width="1"/><line x1="655.5" y1="126.42" x2="1011.57" y2="126.42" stroke="#fff" stroke-opacity="0.04" stroke-width="1"/><line x1="655.5" y1="114.06" x2="1011.57" y2="114.06" stroke="#fff" stroke-opacity="0.04" stroke-width="1"/><line x1="655.5" y1="101.70" x2="1011.57" y2="101.70" stroke="#fff" stroke-opacity="0.04" stroke-width="1"/><line x1="655.5" y1="89.34" x2="1011.57" y2="89.34" stroke="#fff" stroke-opacity="0.04" stroke-width="1"/><line x1="661.53" y1="89.34" x2="661.53" y2="225.30" stroke="#fff" stroke-opacity="0.04" stroke-width="1"/><line x1="667.57" y1="89.34" x2="667.57" y2="225.30" stroke="#fff" stroke-opacity="0.04" stroke-width="1"/><line x1="673.61" y1="89.34" x2="673.61" y2="225.30" stroke="#fff" stroke-opacity="0.04" stroke-width="1"/><line x1="679.64" y1="89.34" x2="679.64" y2="225.30" stroke="#fff" stroke-opacity="0.04" stroke-width="1"/><line x1="685.67" y1="89.34" x2="685.67" y2="225.30" stroke="#fff" stroke-opacity="0.04" stroke-width="1"/><line x1="691.71" y1="89.34" x2="691.71" y2="225.30" stroke="#fff" stroke-opacity="0.04" stroke-width="1"/><line x1="697.75" y1="89.34" x2="697.75" y2="225.30" stroke="#fff" stroke-opacity="0.04" stroke-width="1"/><line x1="703.78" y1="89.34" x2="703.78" y2="225.30" stroke="#fff" stroke-opacity="0.04" stroke-width="1"/><line x1="709.82" y1="89.34" x2="709.82" y2="225.30" stroke="#fff" stroke-opacity="0.04" stroke-width="1"/><line x1="715.85" y1="89.34" x2="715.85" y2="225.30" stroke="#fff" stroke-opacity="0.04" stroke-width="1"/><line x1="721.88" y1="89.34" x2="721.88" y2="225.30" stroke="#fff" stroke-opacity="0.04" stroke-width="1"/><line x1="727.92" y1="89.34" x2="727.92" y2="225.30" stroke="#fff" stroke-opacity="0.04" stroke-width="1"/><line x1="733.96" y1="89.34" x2="733.96" y2="225.30" stroke="#fff" stroke-opacity="0.04" stroke-width="1"/><line x1="739.99" y1="89.34" x2="739.99" y2="225.30" stroke="#fff" stroke-opacity="0.04" stroke-width="1"/><line x1="746.02" y1="89.34" x2="746.02" y2="225.30" stroke="#fff" stroke-opacity="0.04" stroke-width="1"/><line x1="752.06" y1="89.34" x2="752.06" y2="225.30" stroke="#fff" stroke-opacity="0.04" stroke-width="1"/><line x1="758.10" y1="89.34" x2="758.10" y2="225.30" stroke="#fff" stroke-opacity="0.04" stroke-width="1"/><line x1="764.13" y1="89.34" x2="764.13" y2="225.30" stroke="#fff" stroke-opacity="0.04" stroke-width="1"/><line x1="770.16" y1="89.34" x2="770.16" y2="225.30" stroke="#fff" stroke-opacity="0.04" stroke-width="1"/><line x1="776.20" y1="89.34" x2="776.20" y2="225.30" stroke="#fff" stroke-opacity="0.04" stroke-width="1"/><line x1="782.24" y1="89.34" x2="782.24" y2="225.30" stroke="#fff" stroke-opacity="0.04" stroke-width="1"/><line x1="788.27" y1="89.34" x2="788.27" y2="225.30" stroke="#fff" stroke-opacity="0.04" stroke-width="1"/><line x1="794.31" y1="89.34" x2="794.31" y2="225.30" stroke="#fff" stroke-opacity="0.04" stroke-width="1"/><line x1="800.34" y1="89.34" x2="800.34" y2="225.30" stroke="#fff" stroke-opacity="0.04" stroke-width="1"/><line x1="806.38" y1="89.34" x2="806.38" y2="225.30" stroke="#fff" stroke-opacity="0.04" stroke-width="1"/><line x1="812.41" y1="89.34" x2="812.41" y2="225.30" stroke="#fff" stroke-opacity="0.04" stroke-width="1"/><line x1="818.44" y1="89.34" x2="818.44" y2="225.30" stroke="#fff" stroke-opacity="0.04" stroke-width="1"/><line x1="824.48" y1="89.34" x2="824.48" y2="225.30" stroke="#fff" stroke-opacity="0.04" stroke-width="1"/><line x1="830.51" y1="89.34" x2="830.51" y2="225.30" stroke="#fff" stroke-opacity="0.04" stroke-width="1"/><line x1="836.55" y1="89.34" x2="836.55" y2="225.30" stroke="#fff" stroke-opacity="0.04" stroke-width="1"/><line x1="842.59" y1="89.34" x2="842.59" y2="225.30" stroke="#fff" stroke-opacity="0.04" stroke-width="1"/><line x1="848.62" y1="89.34" x2="848.62" y2="225.30" stroke="#fff" stroke-opacity="0.04" stroke-width="1"/><line x1="854.65" y1="89.34" x2="854.65" y2="225.30" stroke="#fff" stroke-opacity="0.04" stroke-width="1"/><line x1="860.69" y1="89.34" x2="860.69" y2="225.30" stroke="#fff" stroke-opacity="0.04" stroke-width="1"/><line x1="866.73" y1="89.34" x2="866.73" y2="225.30" stroke="#fff" stroke-opacity="0.04" stroke-width="1"/><line x1="872.76" y1="89.34" x2="872.76" y2="225.30" stroke="#fff" stroke-opacity="0.04" stroke-width="1"/><line x1="878.80" y1="89.34" x2="878.80" y2="225.30" stroke="#fff" stroke-opacity="0.04" stroke-width="1"/><line x1="884.83" y1="89.34" x2="884.83" y2="225.30" stroke="#fff" stroke-opacity="0.04" stroke-width="1"/><line x1="890.87" y1="89.34" x2="890.87" y2="225.30" stroke="#fff" stroke-opacity="0.04" stroke-width="1"/><line x1="896.90" y1="89.34" x2="896.90" y2="225.30" stroke="#fff" stroke-opacity="0.04" stroke-width="1"/><line x1="902.93" y1="89.34" x2="902.93" y2="225.30" stroke="#fff" stroke-opacity="0.04" stroke-width="1"/><line x1="908.97" y1="89.34" x2="908.97" y2="225.30" stroke="#fff" stroke-opacity="0.04" stroke-width="1"/><line x1="915.00" y1="89.34" x2="915.00" y2="225.30" stroke="#fff" stroke-opacity="0.04" stroke-width="1"/><line x1="921.04" y1="89.34" x2="921.04" y2="225.30" stroke="#fff" stroke-opacity="0.04" stroke-width="1"/><line x1="927.08" y1="89.34" x2="927.08" y2="225.30" stroke="#fff" stroke-opacity="0.04" stroke-width="1"/><line x1="933.11" y1="89.34" x2="933.11" y2="225.30" stroke="#fff" stroke-opacity="0.04" stroke-width="1"/><line x1="939.14" y1="89.34" x2="939.14" y2="225.30" stroke="#fff" stroke-opacity="0.04" stroke-width="1"/><line x1="945.18" y1="89.34" x2="945.18" y2="225.30" stroke="#fff" stroke-opacity="0.04" stroke-width="1"/><line x1="951.22" y1="89.34" x2="951.22" y2="225.30" stroke="#fff" stroke-opacity="0.04" stroke-width="1"/><line x1="957.25" y1="89.34" x2="957.25" y2="225.30" stroke="#fff" stroke-opacity="0.04" stroke-width="1"/><line x1="963.29" y1="89.34" x2="963.29" y2="225.30" stroke="#fff" stroke-opacity="0.04" stroke-width="1"/><line x1="969.32" y1="89.34" x2="969.32" y2="225.30" stroke="#fff" stroke-opacity="0.04" stroke-width="1"/><line x1="975.36" y1="89.34" x2="975.36" y2="225.30" stroke="#fff" stroke-opacity="0.04" stroke-width="1"/><line x1="981.39" y1="89.34" x2="981.39" y2="225.30" stroke="#fff" stroke-opacity="0.04" stroke-width="1"/><line x1="987.42" y1="89.34" x2="987.42" y2="225.30" stroke="#fff" stroke-opacity="0.04" stroke-width="1"/><line x1="993.46" y1="89.34" x2="993.46" y2="225.30" stroke="#fff" stroke-opacity="0.04" stroke-width="1"/><line x1="999.50" y1="89.34" x2="999.50" y2="225.30" stroke="#fff" stroke-opacity="0.04" stroke-width="1"/><line x1="1005.53" y1="89.34" x2="1005.53" y2="225.30" stroke="#fff" stroke-opacity="0.04" stroke-width="1"/><line x1="1011.57" y1="89.34" x2="1011.57" y2="225.30" stroke="#fff" stroke-opacity="0.04" stroke-width="1"/><line x1="655.5" y1="89.34" x2="655.5" y2="225.30" stroke="#1a5a96" stroke-width="1"/><line x1="655.5" y1="225.30" x2="1011.57" y2="225.30" stroke="#1a5a96" stroke-width="1"/><line x1="653.3" y1="225.30" x2="655.5" y2="225.30" stroke="#1a5a96" stroke-width="1"/><line x1="653.3" y1="212.94" x2="655.5" y2="212.94" stroke="#1a5a96" stroke-width="1"/><line x1="653.3" y1="200.58" x2="655.5" y2="200.58" stroke="#1a5a96" stroke-width="1"/><line x1="653.3" y1="188.22" x2="655.5" y2="188.22" stroke="#1a5a96" stroke-width="1"/><line x1="653.3" y1="175.86" x2="655.5" y2="175.86" stroke="#1a5a96" stroke-width="1"/><line x1="653.3" y1="163.50" x2="655.5" y2="163.50" stroke="#1a5a96" stroke-width="1"/><line x1="653.3" y1="151.14" x2="655.5" y2="151.14" stroke="#1a5a96" stroke-width="1"/><line x1="653.3" y1="138.78" x2="655.5" y2="138.78" stroke="#1a5a96" stroke-width="1"/><line x1="653.3" y1="126.42" x2="655.5" y2="126.42" stroke="#1a5a96" stroke-width="1"/><line x1="653.3" y1="114.06" x2="655.5" y2="114.06" stroke="#1a5a96" stroke-width="1"/><line x1="653.3" y1="101.70" x2="655.5" y2="101.70" stroke="#1a5a96" stroke-width="1"/><line x1="653.3" y1="89.34" x2="655.5" y2="89.34" stroke="#1a5a96" stroke-width="1"/><line x1="655.50" y1="225.30" x2="655.50" y2="227.50" stroke="#1a5a96" stroke-width="1"/><line x1="661.53" y1="225.30" x2="661.53" y2="227.50" stroke="#1a5a96" stroke-width="1"/><line x1="667.57" y1="225.30" x2="667.57" y2="227.50" stroke="#1a5a96" stroke-width="1"/><line x1="673.61" y1="225.30" x2="673.61" y2="227.50" stroke="#1a5a96" stroke-width="1"/><line x1="679.64" y1="225.30" x2="679.64" y2="227.50" stroke="#1a5a96" stroke-width="1"/><line x1="685.67" y1="225.30" x2="685.67" y2="227.50" stroke="#1a5a96" stroke-width="1"/><line x1="691.71" y1="225.30" x2="691.71" y2="227.50" stroke="#1a5a96" stroke-width="1"/><line x1="697.75" y1="225.30" x2="697.75" y2="227.50" stroke="#1a5a96" stroke-width="1"/><line x1="703.78" y1="225.30" x2="703.78" y2="227.50" stroke="#1a5a96" stroke-width="1"/><line x1="709.82" y1="225.30" x2="709.82" y2="227.50" stroke="#1a5a96" stroke-width="1"/><line x1="715.85" y1="225.30" x2="715.85" y2="227.50" stroke="#1a5a96" stroke-width="1"/><line x1="721.88" y1="225.30" x2="721.88" y2="227.50" stroke="#1a5a96" stroke-width="1"/><line x1="727.92" y1="225.30" x2="727.92" y2="227.50" stroke="#1a5a96" stroke-width="1"/><line x1="733.96" y1="225.30" x2="733.96" y2="227.50" stroke="#1a5a96" stroke-width="1"/><line x1="739.99" y1="225.30" x2="739.99" y2="227.50" stroke="#1a5a96" stroke-width="1"/><line x1="746.02" y1="225.30" x2="746.02" y2="227.50" stroke="#1a5a96" stroke-width="1"/><line x1="752.06" y1="225.30" x2="752.06" y2="227.50" stroke="#1a5a96" stroke-width="1"/><line x1="758.10" y1="225.30" x2="758.10" y2="227.50" stroke="#1a5a96" stroke-width="1"/><line x1="764.13" y1="225.30" x2="764.13" y2="227.50" stroke="#1a5a96" stroke-width="1"/><line x1="770.16" y1="225.30" x2="770.16" y2="227.50" stroke="#1a5a96" stroke-width="1"/><line x1="776.20" y1="225.30" x2="776.20" y2="227.50" stroke="#1a5a96" stroke-width="1"/><line x1="782.24" y1="225.30" x2="782.24" y2="227.50" stroke="#1a5a96" stroke-width="1"/><line x1="788.27" y1="225.30" x2="788.27" y2="227.50" stroke="#1a5a96" stroke-width="1"/><line x1="794.31" y1="225.30" x2="794.31" y2="227.50" stroke="#1a5a96" stroke-width="1"/><line x1="800.34" y1="225.30" x2="800.34" y2="227.50" stroke="#1a5a96" stroke-width="1"/><line x1="806.38" y1="225.30" x2="806.38" y2="227.50" stroke="#1a5a96" stroke-width="1"/><line x1="812.41" y1="225.30" x2="812.41" y2="227.50" stroke="#1a5a96" stroke-width="1"/><line x1="818.44" y1="225.30" x2="818.44" y2="227.50" stroke="#1a5a96" stroke-width="1"/><line x1="824.48" y1="225.30" x2="824.48" y2="227.50" stroke="#1a5a96" stroke-width="1"/><line x1="830.51" y1="225.30" x2="830.51" y2="227.50" stroke="#1a5a96" stroke-width="1"/><line x1="836.55" y1="225.30" x2="836.55" y2="227.50" stroke="#1a5a96" stroke-width="1"/><line x1="842.59" y1="225.30" x2="842.59" y2="227.50" stroke="#1a5a96" stroke-width="1"/><line x1="848.62" y1="225.30" x2="848.62" y2="227.50" stroke="#1a5a96" stroke-width="1"/><line x1="854.65" y1="225.30" x2="854.65" y2="227.50" stroke="#1a5a96" stroke-width="1"/><line x1="860.69" y1="225.30" x2="860.69" y2="227.50" stroke="#1a5a96" stroke-width="1"/><line x1="866.73" y1="225.30" x2="866.73" y2="227.50" stroke="#1a5a96" stroke-width="1"/><line x1="872.76" y1="225.30" x2="872.76" y2="227.50" stroke="#1a5a96" stroke-width="1"/><line x1="878.80" y1="225.30" x2="878.80" y2="227.50" stroke="#1a5a96" stroke-width="1"/><line x1="884.83" y1="225.30" x2="884.83" y2="227.50" stroke="#1a5a96" stroke-width="1"/><line x1="890.87" y1="225.30" x2="890.87" y2="227.50" stroke="#1a5a96" stroke-width="1"/><line x1="896.90" y1="225.30" x2="896.90" y2="227.50" stroke="#1a5a96" stroke-width="1"/><line x1="902.93" y1="225.30" x2="902.93" y2="227.50" stroke="#1a5a96" stroke-width="1"/><line x1="908.97" y1="225.30" x2="908.97" y2="227.50" stroke="#1a5a96" stroke-width="1"/><line x1="915.00" y1="225.30" x2="915.00" y2="227.50" stroke="#1a5a96" stroke-width="1"/><line x1="921.04" y1="225.30" x2="921.04" y2="227.50" stroke="#1a5a96" stroke-width="1"/><line x1="927.08" y1="225.30" x2="927.08" y2="227.50" stroke="#1a5a96" stroke-width="1"/><line x1="933.11" y1="225.30" x2="933.11" y2="227.50" stroke="#1a5a96" stroke-width="1"/><line x1="939.14" y1="225.30" x2="939.14" y2="227.50" stroke="#1a5a96" stroke-width="1"/><line x1="945.18" y1="225.30" x2="945.18" y2="227.50" stroke="#1a5a96" stroke-width="1"/><line x1="951.22" y1="225.30" x2="951.22" y2="227.50" stroke="#1a5a96" stroke-width="1"/><line x1="957.25" y1="225.30" x2="957.25" y2="227.50" stroke="#1a5a96" stroke-width="1"/><line x1="963.29" y1="225.30" x2="963.29" y2="227.50" stroke="#1a5a96" stroke-width="1"/><line x1="969.32" y1="225.30" x2="969.32" y2="227.50" stroke="#1a5a96" stroke-width="1"/><line x1="975.36" y1="225.30" x2="975.36" y2="227.50" stroke="#1a5a96" stroke-width="1"/><line x1="981.39" y1="225.30" x2="981.39" y2="227.50" stroke="#1a5a96" stroke-width="1"/><line x1="987.42" y1="225.30" x2="987.42" y2="227.50" stroke="#1a5a96" stroke-width="1"/><line x1="993.46" y1="225.30" x2="993.46" y2="227.50" stroke="#1a5a96" stroke-width="1"/><line x1="999.50" y1="225.30" x2="999.50" y2="227.50" stroke="#1a5a96" stroke-width="1"/><line x1="1005.53" y1="225.30" x2="1005.53" y2="227.50" stroke="#1a5a96" stroke-width="1"/><line x1="1011.57" y1="225.30" x2="1011.57" y2="227.50" stroke="#1a5a96" stroke-width="1"/></svg>
<div class="t" style="left:546.00px;width:200px;text-align:center;top:221px;font-size:7.0px;color:#e2e2e2;font-weight:normal;">0</div>
<div class="t" style="left:546.00px;width:200px;text-align:center;top:209px;font-size:7.0px;color:#e2e2e2;font-weight:normal;">1</div>
<div class="t" style="left:546.00px;width:200px;text-align:center;top:196px;font-size:7.0px;color:#e2e2e2;font-weight:normal;">2</div>
<div class="t" style="left:546.00px;width:200px;text-align:center;top:184px;font-size:7.0px;color:#e2e2e2;font-weight:normal;">3</div>
<div class="t" style="left:546.00px;width:200px;text-align:center;top:172px;font-size:7.0px;color:#e2e2e2;font-weight:normal;">4</div>
<div class="t" style="left:546.00px;width:200px;text-align:center;top:159px;font-size:7.0px;color:#e2e2e2;font-weight:normal;">5</div>
<div class="t" style="left:546.00px;width:200px;text-align:center;top:147px;font-size:7.0px;color:#e2e2e2;font-weight:normal;">6</div>
<div class="t" style="left:546.00px;width:200px;text-align:center;top:135px;font-size:7.0px;color:#e2e2e2;font-weight:normal;">7</div>
<div class="t" style="left:546.00px;width:200px;text-align:center;top:122px;font-size:7.0px;color:#e2e2e2;font-weight:normal;">8</div>
<div class="t" style="left:546.00px;width:200px;text-align:center;top:110px;font-size:7.0px;color:#e2e2e2;font-weight:normal;">9</div>
<div class="t" style="left:546.00px;width:200px;text-align:center;top:98px;font-size:7.0px;color:#e2e2e2;font-weight:normal;">10</div>
<div class="t" style="left:546.00px;width:200px;text-align:center;top:85px;font-size:7.0px;color:#e2e2e2;font-weight:normal;">11</div>
<div class="t" style="left:556.50px;width:200px;text-align:center;top:231px;font-size:6.9px;color:#e2e2e2;font-weight:normal;">2025-12-06</div>
<div class="t" style="left:556.50px;width:200px;text-align:center;top:239px;font-size:6.9px;color:#e2e2e2;font-weight:normal;">06:55:00</div>
<div class="t" style="left:598.75px;width:200px;text-align:center;top:231px;font-size:6.9px;color:#e2e2e2;font-weight:normal;">2025-12-06</div>
<div class="t" style="left:598.75px;width:200px;text-align:center;top:239px;font-size:6.9px;color:#e2e2e2;font-weight:normal;">07:02:00</div>
<div class="t" style="left:640.99px;width:200px;text-align:center;top:231px;font-size:6.9px;color:#e2e2e2;font-weight:normal;">2025-12-06</div>
<div class="t" style="left:640.99px;width:200px;text-align:center;top:239px;font-size:6.9px;color:#e2e2e2;font-weight:normal;">07:09:00</div>
<div class="t" style="left:683.24px;width:200px;text-align:center;top:231px;font-size:6.9px;color:#e2e2e2;font-weight:normal;">2025-12-06</div>
<div class="t" style="left:683.24px;width:200px;text-align:center;top:239px;font-size:6.9px;color:#e2e2e2;font-weight:normal;">07:16:00</div>
<div class="t" style="left:725.48px;width:200px;text-align:center;top:231px;font-size:6.9px;color:#e2e2e2;font-weight:normal;">2025-12-06</div>
<div class="t" style="left:725.48px;width:200px;text-align:center;top:239px;font-size:6.9px;color:#e2e2e2;font-weight:normal;">07:23:00</div>
<div class="t" style="left:767.73px;width:200px;text-align:center;top:231px;font-size:6.9px;color:#e2e2e2;font-weight:normal;">2025-12-06</div>
<div class="t" style="left:767.73px;width:200px;text-align:center;top:239px;font-size:6.9px;color:#e2e2e2;font-weight:normal;">07:30:00</div>
<div class="t" style="left:809.97px;width:200px;text-align:center;top:231px;font-size:6.9px;color:#e2e2e2;font-weight:normal;">2025-12-06</div>
<div class="t" style="left:809.97px;width:200px;text-align:center;top:239px;font-size:6.9px;color:#e2e2e2;font-weight:normal;">07:37:00</div>
<div class="t" style="left:852.22px;width:200px;text-align:center;top:231px;font-size:6.9px;color:#e2e2e2;font-weight:normal;">2025-12-06</div>
<div class="t" style="left:852.22px;width:200px;text-align:center;top:239px;font-size:6.9px;color:#e2e2e2;font-weight:normal;">07:44:00</div>
<div class="t" style="left:894.46px;width:200px;text-align:center;top:231px;font-size:6.9px;color:#e2e2e2;font-weight:normal;">2025-12-06</div>
<div class="t" style="left:894.46px;width:200px;text-align:center;top:239px;font-size:6.9px;color:#e2e2e2;font-weight:normal;">07:51:00</div>
<div class="t" style="left:616.4px;top:152.9px;width:40px;text-align:center;font-size:8.2px;line-height:8px;color:#e2e2e2;font-weight:normal;-webkit-text-stroke:0.2px currentColor;transform:rotate(-90deg);">%</div>
<svg class="r" style="left:0;top:0" width="1024" height="490"><line x1="265.0" y1="417.70" x2="615.16" y2="417.70" stroke="#373737" stroke-width="1"/><line x1="265.0" y1="406.31" x2="615.16" y2="406.31" stroke="#373737" stroke-width="1"/><line x1="265.0" y1="394.92" x2="615.16" y2="394.92" stroke="#373737" stroke-width="1"/><line x1="265.0" y1="383.53" x2="615.16" y2="383.53" stroke="#373737" stroke-width="1"/><line x1="265.0" y1="372.14" x2="615.16" y2="372.14" stroke="#373737" stroke-width="1"/><line x1="265.0" y1="360.75" x2="615.16" y2="360.75" stroke="#373737" stroke-width="1"/><line x1="265.0" y1="349.36" x2="615.16" y2="349.36" stroke="#373737" stroke-width="1"/><line x1="265.0" y1="337.97" x2="615.16" y2="337.97" stroke="#373737" stroke-width="1"/><line x1="265.0" y1="326.58" x2="615.16" y2="326.58" stroke="#373737" stroke-width="1"/><line x1="265.0" y1="315.19" x2="615.16" y2="315.19" stroke="#373737" stroke-width="1"/><line x1="265.0" y1="303.80" x2="615.16" y2="303.80" stroke="#373737" stroke-width="1"/><line x1="265.0" y1="292.41" x2="615.16" y2="292.41" stroke="#373737" stroke-width="1"/><line x1="265.0" y1="281.02" x2="615.16" y2="281.02" stroke="#373737" stroke-width="1"/><line x1="270.94" y1="281.02" x2="270.94" y2="417.70" stroke="#373737" stroke-width="1"/><line x1="276.87" y1="281.02" x2="276.87" y2="417.70" stroke="#373737" stroke-width="1"/><line x1="282.81" y1="281.02" x2="282.81" y2="417.70" stroke="#373737" stroke-width="1"/><line x1="288.74" y1="281.02" x2="288.74" y2="417.70" stroke="#373737" stroke-width="1"/><line x1="294.68" y1="281.02" x2="294.68" y2="417.70" stroke="#373737" stroke-width="1"/><line x1="300.61" y1="281.02" x2="300.61" y2="417.70" stroke="#373737" stroke-width="1"/><line x1="306.55" y1="281.02" x2="306.55" y2="417.70" stroke="#373737" stroke-width="1"/><line x1="312.48" y1="281.02" x2="312.48" y2="417.70" stroke="#373737" stroke-width="1"/><line x1="318.42" y1="281.02" x2="318.42" y2="417.70" stroke="#373737" stroke-width="1"/><line x1="324.35" y1="281.02" x2="324.35" y2="417.70" stroke="#373737" stroke-width="1"/><line x1="330.28" y1="281.02" x2="330.28" y2="417.70" stroke="#373737" stroke-width="1"/><line x1="336.22" y1="281.02" x2="336.22" y2="417.70" stroke="#373737" stroke-width="1"/><line x1="342.15" y1="281.02" x2="342.15" y2="417.70" stroke="#373737" stroke-width="1"/><line x1="348.09" y1="281.02" x2="348.09" y2="417.70" stroke="#373737" stroke-width="1"/><line x1="354.02" y1="281.02" x2="354.02" y2="417.70" stroke="#373737" stroke-width="1"/><line x1="359.96" y1="281.02" x2="359.96" y2="417.70" stroke="#373737" stroke-width="1"/><line x1="365.89" y1="281.02" x2="365.89" y2="417.70" stroke="#373737" stroke-width="1"/><line x1="371.83" y1="281.02" x2="371.83" y2="417.70" stroke="#373737" stroke-width="1"/><line x1="377.76" y1="281.02" x2="377.76" y2="417.70" stroke="#373737" stroke-width="1"/><line x1="383.70" y1="281.02" x2="383.70" y2="417.70" stroke="#373737" stroke-width="1"/><line x1="389.63" y1="281.02" x2="389.63" y2="417.70" stroke="#373737" stroke-width="1"/><line x1="395.57" y1="281.02" x2="395.57" y2="417.70" stroke="#373737" stroke-width="1"/><line x1="401.50" y1="281.02" x2="401.50" y2="417.70" stroke="#373737" stroke-width="1"/><line x1="407.44" y1="281.02" x2="407.44" y2="417.70" stroke="#373737" stroke-width="1"/><line x1="413.38" y1="281.02" x2="413.38" y2="417.70" stroke="#373737" stroke-width="1"/><line x1="419.31" y1="281.02" x2="419.31" y2="417.70" stroke="#373737" stroke-width="1"/><line x1="425.25" y1="281.02" x2="425.25" y2="417.70" stroke="#373737" stroke-width="1"/><line x1="431.18" y1="281.02" x2="431.18" y2="417.70" stroke="#373737" stroke-width="1"/><line x1="437.12" y1="281.02" x2="437.12" y2="417.70" stroke="#373737" stroke-width="1"/><line x1="443.05" y1="281.02" x2="443.05" y2="417.70" stroke="#373737" stroke-width="1"/><line x1="448.99" y1="281.02" x2="448.99" y2="417.70" stroke="#373737" stroke-width="1"/><line x1="454.92" y1="281.02" x2="454.92" y2="417.70" stroke="#373737" stroke-width="1"/><line x1="460.86" y1="281.02" x2="460.86" y2="417.70" stroke="#373737" stroke-width="1"/><line x1="466.79" y1="281.02" x2="466.79" y2="417.70" stroke="#373737" stroke-width="1"/><line x1="472.73" y1="281.02" x2="472.73" y2="417.70" stroke="#373737" stroke-width="1"/><line x1="478.66" y1="281.02" x2="478.66" y2="417.70" stroke="#373737" stroke-width="1"/><line x1="484.60" y1="281.02" x2="484.60" y2="417.70" stroke="#373737" stroke-width="1"/><line x1="490.53" y1="281.02" x2="490.53" y2="417.70" stroke="#373737" stroke-width="1"/><line x1="496.46" y1="281.02" x2="496.46" y2="417.70" stroke="#373737" stroke-width="1"/><line x1="502.40" y1="281.02" x2="502.40" y2="417.70" stroke="#373737" stroke-width="1"/><line x1="508.33" y1="281.02" x2="508.33" y2="417.70" stroke="#373737" stroke-width="1"/><line x1="514.27" y1="281.02" x2="514.27" y2="417.70" stroke="#373737" stroke-width="1"/><line x1="520.20" y1="281.02" x2="520.20" y2="417.70" stroke="#373737" stroke-width="1"/><line x1="526.14" y1="281.02" x2="526.14" y2="417.70" stroke="#373737" stroke-width="1"/><line x1="532.08" y1="281.02" x2="532.08" y2="417.70" stroke="#373737" stroke-width="1"/><line x1="538.01" y1="281.02" x2="538.01" y2="417.70" stroke="#373737" stroke-width="1"/><line x1="543.94" y1="281.02" x2="543.94" y2="417.70" stroke="#373737" stroke-width="1"/><line x1="549.88" y1="281.02" x2="549.88" y2="417.70" stroke="#373737" stroke-width="1"/><line x1="555.82" y1="281.02" x2="555.82" y2="417.70" stroke="#373737" stroke-width="1"/><line x1="561.75" y1="281.02" x2="561.75" y2="417.70" stroke="#373737" stroke-width="1"/><line x1="567.68" y1="281.02" x2="567.68" y2="417.70" stroke="#373737" stroke-width="1"/><line x1="573.62" y1="281.02" x2="573.62" y2="417.70" stroke="#373737" stroke-width="1"/><line x1="579.56" y1="281.02" x2="579.56" y2="417.70" stroke="#373737" stroke-width="1"/><line x1="585.49" y1="281.02" x2="585.49" y2="417.70" stroke="#373737" stroke-width="1"/><line x1="591.42" y1="281.02" x2="591.42" y2="417.70" stroke="#373737" stroke-width="1"/><line x1="597.36" y1="281.02" x2="597.36" y2="417.70" stroke="#373737" stroke-width="1"/><line x1="603.29" y1="281.02" x2="603.29" y2="417.70" stroke="#373737" stroke-width="1"/><line x1="609.23" y1="281.02" x2="609.23" y2="417.70" stroke="#373737" stroke-width="1"/><line x1="615.16" y1="281.02" x2="615.16" y2="417.70" stroke="#373737" stroke-width="1"/><polygon points="265.00,417.70 265.00,281.02 270.94,281.02 276.87,281.02 282.81,281.02 288.74,281.02 294.68,281.02 300.61,281.02 306.55,281.02 312.48,281.02 318.42,281.02 324.35,281.02 330.28,281.02 336.22,281.02 342.15,281.02 348.09,281.02 354.02,281.02 359.96,281.02 365.89,281.02 371.83,281.02 377.76,281.02 383.70,281.02 389.63,281.02 395.57,281.02 401.50,281.02 407.44,281.02 413.38,281.02 419.31,281.02 425.25,281.02 431.18,281.02 437.12,281.02 443.05,281.02 448.99,281.02 454.92,281.02 460.86,281.02 466.79,281.02 472.73,281.02 478.66,281.02 484.60,281.02 490.53,281.02 496.46,281.02 502.40,281.02 508.33,281.02 514.27,281.02 520.20,281.02 526.14,281.02 532.08,281.02 538.01,281.02 543.94,281.02 549.88,281.02 555.82,281.02 561.75,281.02 567.68,281.02 573.62,281.02 579.56,281.02 585.49,281.02 591.42,281.02 591.42,417.70" fill="#778919" fill-opacity="0.85"/><polygon points="608.93,417.70 608.93,281.02 615.16,281.02 615.16,417.70" fill="#778919" fill-opacity="0.85"/><polygon points="265.00,417.70 265.00,396.17 270.94,396.17 276.87,396.17 282.81,396.17 288.74,396.17 294.68,396.17 300.61,396.17 306.55,396.17 312.48,396.17 318.42,396.17 324.35,396.17 330.28,396.17 336.22,396.17 342.15,396.17 348.09,396.17 354.02,396.17 359.96,396.17 365.89,396.17 371.83,396.17 377.76,396.17 383.70,396.17 389.63,396.17 395.57,396.17 401.50,396.17 407.44,396.17 413.38,396.17 419.31,396.17 425.25,396.17 431.18,396.17 437.12,396.17 443.05,396.17 448.99,396.17 454.92,396.17 460.86,396.17 466.79,396.17 472.73,396.17 478.66,396.17 484.60,396.17 490.53,396.17 496.46,396.17 502.40,396.17 508.33,396.17 514.27,396.17 520.20,396.17 526.14,396.17 532.08,396.17 538.01,396.17 543.94,396.17 549.88,396.17 555.82,396.17 561.75,396.17 567.68,396.17 573.62,396.17 579.56,396.17 585.49,396.17 591.42,396.17 591.42,417.70" fill="#2c677c" fill-opacity="0.85"/><polygon points="608.93,417.70 608.93,409.21 615.16,403.52 615.16,417.70" fill="#2c677c" fill-opacity="0.85"/><line x1="265.0" y1="417.70" x2="615.16" y2="417.70" stroke="#fff" stroke-opacity="0.04" stroke-width="1"/><line x1="265.0" y1="406.31" x2="615.16" y2="406.31" stroke="#fff" stroke-opacity="0.04" stroke-width="1"/><line x1="265.0" y1="394.92" x2="615.16" y2="394.92" stroke="#fff" stroke-opacity="0.04" stroke-width="1"/><line x1="265.0" y1="383.53" x2="615.16" y2="383.53" stroke="#fff" stroke-opacity="0.04" stroke-width="1"/><line x1="265.0" y1="372.14" x2="615.16" y2="372.14" stroke="#fff" stroke-opacity="0.04" stroke-width="1"/><line x1="265.0" y1="360.75" x2="615.16" y2="360.75" stroke="#fff" stroke-opacity="0.04" stroke-width="1"/><line x1="265.0" y1="349.36" x2="615.16" y2="349.36" stroke="#fff" stroke-opacity="0.04" stroke-width="1"/><line x1="265.0" y1="337.97" x2="615.16" y2="337.97" stroke="#fff" stroke-opacity="0.04" stroke-width="1"/><line x1="265.0" y1="326.58" x2="615.16" y2="326.58" stroke="#fff" stroke-opacity="0.04" stroke-width="1"/><line x1="265.0" y1="315.19" x2="615.16" y2="315.19" stroke="#fff" stroke-opacity="0.04" stroke-width="1"/><line x1="265.0" y1="303.80" x2="615.16" y2="303.80" stroke="#fff" stroke-opacity="0.04" stroke-width="1"/><line x1="265.0" y1="292.41" x2="615.16" y2="292.41" stroke="#fff" stroke-opacity="0.04" stroke-width="1"/><line x1="265.0" y1="281.02" x2="615.16" y2="281.02" stroke="#fff" stroke-opacity="0.04" stroke-width="1"/><line x1="270.94" y1="281.02" x2="270.94" y2="417.70" stroke="#fff" stroke-opacity="0.04" stroke-width="1"/><line x1="276.87" y1="281.02" x2="276.87" y2="417.70" stroke="#fff" stroke-opacity="0.04" stroke-width="1"/><line x1="282.81" y1="281.02" x2="282.81" y2="417.70" stroke="#fff" stroke-opacity="0.04" stroke-width="1"/><line x1="288.74" y1="281.02" x2="288.74" y2="417.70" stroke="#fff" stroke-opacity="0.04" stroke-width="1"/><line x1="294.68" y1="281.02" x2="294.68" y2="417.70" stroke="#fff" stroke-opacity="0.04" stroke-width="1"/><line x1="300.61" y1="281.02" x2="300.61" y2="417.70" stroke="#fff" stroke-opacity="0.04" stroke-width="1"/><line x1="306.55" y1="281.02" x2="306.55" y2="417.70" stroke="#fff" stroke-opacity="0.04" stroke-width="1"/><line x1="312.48" y1="281.02" x2="312.48" y2="417.70" stroke="#fff" stroke-opacity="0.04" stroke-width="1"/><line x1="318.42" y1="281.02" x2="318.42" y2="417.70" stroke="#fff" stroke-opacity="0.04" stroke-width="1"/><line x1="324.35" y1="281.02" x2="324.35" y2="417.70" stroke="#fff" stroke-opacity="0.04" stroke-width="1"/><line x1="330.28" y1="281.02" x2="330.28" y2="417.70" stroke="#fff" stroke-opacity="0.04" stroke-width="1"/><line x1="336.22" y1="281.02" x2="336.22" y2="417.70" stroke="#fff" stroke-opacity="0.04" stroke-width="1"/><line x1="342.15" y1="281.02" x2="342.15" y2="417.70" stroke="#fff" stroke-opacity="0.04" stroke-width="1"/><line x1="348.09" y1="281.02" x2="348.09" y2="417.70" stroke="#fff" stroke-opacity="0.04" stroke-width="1"/><line x1="354.02" y1="281.02" x2="354.02" y2="417.70" stroke="#fff" stroke-opacity="0.04" stroke-width="1"/><line x1="359.96" y1="281.02" x2="359.96" y2="417.70" stroke="#fff" stroke-opacity="0.04" stroke-width="1"/><line x1="365.89" y1="281.02" x2="365.89" y2="417.70" stroke="#fff" stroke-opacity="0.04" stroke-width="1"/><line x1="371.83" y1="281.02" x2="371.83" y2="417.70" stroke="#fff" stroke-opacity="0.04" stroke-width="1"/><line x1="377.76" y1="281.02" x2="377.76" y2="417.70" stroke="#fff" stroke-opacity="0.04" stroke-width="1"/><line x1="383.70" y1="281.02" x2="383.70" y2="417.70" stroke="#fff" stroke-opacity="0.04" stroke-width="1"/><line x1="389.63" y1="281.02" x2="389.63" y2="417.70" stroke="#fff" stroke-opacity="0.04" stroke-width="1"/><line x1="395.57" y1="281.02" x2="395.57" y2="417.70" stroke="#fff" stroke-opacity="0.04" stroke-width="1"/><line x1="401.50" y1="281.02" x2="401.50" y2="417.70" stroke="#fff" stroke-opacity="0.04" stroke-width="1"/><line x1="407.44" y1="281.02" x2="407.44" y2="417.70" stroke="#fff" stroke-opacity="0.04" stroke-width="1"/><line x1="413.38" y1="281.02" x2="413.38" y2="417.70" stroke="#fff" stroke-opacity="0.04" stroke-width="1"/><line x1="419.31" y1="281.02" x2="419.31" y2="417.70" stroke="#fff" stroke-opacity="0.04" stroke-width="1"/><line x1="425.25" y1="281.02" x2="425.25" y2="417.70" stroke="#fff" stroke-opacity="0.04" stroke-width="1"/><line x1="431.18" y1="281.02" x2="431.18" y2="417.70" stroke="#fff" stroke-opacity="0.04" stroke-width="1"/><line x1="437.12" y1="281.02" x2="437.12" y2="417.70" stroke="#fff" stroke-opacity="0.04" stroke-width="1"/><line x1="443.05" y1="281.02" x2="443.05" y2="417.70" stroke="#fff" stroke-opacity="0.04" stroke-width="1"/><line x1="448.99" y1="281.02" x2="448.99" y2="417.70" stroke="#fff" stroke-opacity="0.04" stroke-width="1"/><line x1="454.92" y1="281.02" x2="454.92" y2="417.70" stroke="#fff" stroke-opacity="0.04" stroke-width="1"/><line x1="460.86" y1="281.02" x2="460.86" y2="417.70" stroke="#fff" stroke-opacity="0.04" stroke-width="1"/><line x1="466.79" y1="281.02" x2="466.79" y2="417.70" stroke="#fff" stroke-opacity="0.04" stroke-width="1"/><line x1="472.73" y1="281.02" x2="472.73" y2="417.70" stroke="#fff" stroke-opacity="0.04" stroke-width="1"/><line x1="478.66" y1="281.02" x2="478.66" y2="417.70" stroke="#fff" stroke-opacity="0.04" stroke-width="1"/><line x1="484.60" y1="281.02" x2="484.60" y2="417.70" stroke="#fff" stroke-opacity="0.04" stroke-width="1"/><line x1="490.53" y1="281.02" x2="490.53" y2="417.70" stroke="#fff" stroke-opacity="0.04" stroke-width="1"/><line x1="496.46" y1="281.02" x2="496.46" y2="417.70" stroke="#fff" stroke-opacity="0.04" stroke-width="1"/><line x1="502.40" y1="281.02" x2="502.40" y2="417.70" stroke="#fff" stroke-opacity="0.04" stroke-width="1"/><line x1="508.33" y1="281.02" x2="508.33" y2="417.70" stroke="#fff" stroke-opacity="0.04" stroke-width="1"/><line x1="514.27" y1="281.02" x2="514.27" y2="417.70" stroke="#fff" stroke-opacity="0.04" stroke-width="1"/><line x1="520.20" y1="281.02" x2="520.20" y2="417.70" stroke="#fff" stroke-opacity="0.04" stroke-width="1"/><line x1="526.14" y1="281.02" x2="526.14" y2="417.70" stroke="#fff" stroke-opacity="0.04" stroke-width="1"/><line x1="532.08" y1="281.02" x2="532.08" y2="417.70" stroke="#fff" stroke-opacity="0.04" stroke-width="1"/><line x1="538.01" y1="281.02" x2="538.01" y2="417.70" stroke="#fff" stroke-opacity="0.04" stroke-width="1"/><line x1="543.94" y1="281.02" x2="543.94" y2="417.70" stroke="#fff" stroke-opacity="0.04" stroke-width="1"/><line x1="549.88" y1="281.02" x2="549.88" y2="417.70" stroke="#fff" stroke-opacity="0.04" stroke-width="1"/><line x1="555.82" y1="281.02" x2="555.82" y2="417.70" stroke="#fff" stroke-opacity="0.04" stroke-width="1"/><line x1="561.75" y1="281.02" x2="561.75" y2="417.70" stroke="#fff" stroke-opacity="0.04" stroke-width="1"/><line x1="567.68" y1="281.02" x2="567.68" y2="417.70" stroke="#fff" stroke-opacity="0.04" stroke-width="1"/><line x1="573.62" y1="281.02" x2="573.62" y2="417.70" stroke="#fff" stroke-opacity="0.04" stroke-width="1"/><line x1="579.56" y1="281.02" x2="579.56" y2="417.70" stroke="#fff" stroke-opacity="0.04" stroke-width="1"/><line x1="585.49" y1="281.02" x2="585.49" y2="417.70" stroke="#fff" stroke-opacity="0.04" stroke-width="1"/><line x1="591.42" y1="281.02" x2="591.42" y2="417.70" stroke="#fff" stroke-opacity="0.04" stroke-width="1"/><line x1="597.36" y1="281.02" x2="597.36" y2="417.70" stroke="#fff" stroke-opacity="0.04" stroke-width="1"/><line x1="603.29" y1="281.02" x2="603.29" y2="417.70" stroke="#fff" stroke-opacity="0.04" stroke-width="1"/><line x1="609.23" y1="281.02" x2="609.23" y2="417.70" stroke="#fff" stroke-opacity="0.04" stroke-width="1"/><line x1="615.16" y1="281.02" x2="615.16" y2="417.70" stroke="#fff" stroke-opacity="0.04" stroke-width="1"/><line x1="265.0" y1="281.02" x2="265.0" y2="417.70" stroke="#1a5a96" stroke-width="1"/><line x1="265.0" y1="417.70" x2="615.16" y2="417.70" stroke="#1a5a96" stroke-width="1"/><line x1="262.8" y1="417.70" x2="265.0" y2="417.70" stroke="#1a5a96" stroke-width="1"/><line x1="262.8" y1="406.31" x2="265.0" y2="406.31" stroke="#1a5a96" stroke-width="1"/><line x1="262.8" y1="394.92" x2="265.0" y2="394.92" stroke="#1a5a96" stroke-width="1"/><line x1="262.8" y1="383.53" x2="265.0" y2="383.53" stroke="#1a5a96" stroke-width="1"/><line x1="262.8" y1="372.14" x2="265.0" y2="372.14" stroke="#1a5a96" stroke-width="1"/><line x1="262.8" y1="360.75" x2="265.0" y2="360.75" stroke="#1a5a96" stroke-width="1"/><line x1="262.8" y1="349.36" x2="265.0" y2="349.36" stroke="#1a5a96" stroke-width="1"/><line x1="262.8" y1="337.97" x2="265.0" y2="337.97" stroke="#1a5a96" stroke-width="1"/><line x1="262.8" y1="326.58" x2="265.0" y2="326.58" stroke="#1a5a96" stroke-width="1"/><line x1="262.8" y1="315.19" x2="265.0" y2="315.19" stroke="#1a5a96" stroke-width="1"/><line x1="262.8" y1="303.80" x2="265.0" y2="303.80" stroke="#1a5a96" stroke-width="1"/><line x1="262.8" y1="292.41" x2="265.0" y2="292.41" stroke="#1a5a96" stroke-width="1"/><line x1="262.8" y1="281.02" x2="265.0" y2="281.02" stroke="#1a5a96" stroke-width="1"/><line x1="265.00" y1="417.70" x2="265.00" y2="419.90" stroke="#1a5a96" stroke-width="1"/><line x1="270.94" y1="417.70" x2="270.94" y2="419.90" stroke="#1a5a96" stroke-width="1"/><line x1="276.87" y1="417.70" x2="276.87" y2="419.90" stroke="#1a5a96" stroke-width="1"/><line x1="282.81" y1="417.70" x2="282.81" y2="419.90" stroke="#1a5a96" stroke-width="1"/><line x1="288.74" y1="417.70" x2="288.74" y2="419.90" stroke="#1a5a96" stroke-width="1"/><line x1="294.68" y1="417.70" x2="294.68" y2="419.90" stroke="#1a5a96" stroke-width="1"/><line x1="300.61" y1="417.70" x2="300.61" y2="419.90" stroke="#1a5a96" stroke-width="1"/><line x1="306.55" y1="417.70" x2="306.55" y2="419.90" stroke="#1a5a96" stroke-width="1"/><line x1="312.48" y1="417.70" x2="312.48" y2="419.90" stroke="#1a5a96" stroke-width="1"/><line x1="318.42" y1="417.70" x2="318.42" y2="419.90" stroke="#1a5a96" stroke-width="1"/><line x1="324.35" y1="417.70" x2="324.35" y2="419.90" stroke="#1a5a96" stroke-width="1"/><line x1="330.28" y1="417.70" x2="330.28" y2="419.90" stroke="#1a5a96" stroke-width="1"/><line x1="336.22" y1="417.70" x2="336.22" y2="419.90" stroke="#1a5a96" stroke-width="1"/><line x1="342.15" y1="417.70" x2="342.15" y2="419.90" stroke="#1a5a96" stroke-width="1"/><line x1="348.09" y1="417.70" x2="348.09" y2="419.90" stroke="#1a5a96" stroke-width="1"/><line x1="354.02" y1="417.70" x2="354.02" y2="419.90" stroke="#1a5a96" stroke-width="1"/><line x1="359.96" y1="417.70" x2="359.96" y2="419.90" stroke="#1a5a96" stroke-width="1"/><line x1="365.89" y1="417.70" x2="365.89" y2="419.90" stroke="#1a5a96" stroke-width="1"/><line x1="371.83" y1="417.70" x2="371.83" y2="419.90" stroke="#1a5a96" stroke-width="1"/><line x1="377.76" y1="417.70" x2="377.76" y2="419.90" stroke="#1a5a96" stroke-width="1"/><line x1="383.70" y1="417.70" x2="383.70" y2="419.90" stroke="#1a5a96" stroke-width="1"/><line x1="389.63" y1="417.70" x2="389.63" y2="419.90" stroke="#1a5a96" stroke-width="1"/><line x1="395.57" y1="417.70" x2="395.57" y2="419.90" stroke="#1a5a96" stroke-width="1"/><line x1="401.50" y1="417.70" x2="401.50" y2="419.90" stroke="#1a5a96" stroke-width="1"/><line x1="407.44" y1="417.70" x2="407.44" y2="419.90" stroke="#1a5a96" stroke-width="1"/><line x1="413.38" y1="417.70" x2="413.38" y2="419.90" stroke="#1a5a96" stroke-width="1"/><line x1="419.31" y1="417.70" x2="419.31" y2="419.90" stroke="#1a5a96" stroke-width="1"/><line x1="425.25" y1="417.70" x2="425.25" y2="419.90" stroke="#1a5a96" stroke-width="1"/><line x1="431.18" y1="417.70" x2="431.18" y2="419.90" stroke="#1a5a96" stroke-width="1"/><line x1="437.12" y1="417.70" x2="437.12" y2="419.90" stroke="#1a5a96" stroke-width="1"/><line x1="443.05" y1="417.70" x2="443.05" y2="419.90" stroke="#1a5a96" stroke-width="1"/><line x1="448.99" y1="417.70" x2="448.99" y2="419.90" stroke="#1a5a96" stroke-width="1"/><line x1="454.92" y1="417.70" x2="454.92" y2="419.90" stroke="#1a5a96" stroke-width="1"/><line x1="460.86" y1="417.70" x2="460.86" y2="419.90" stroke="#1a5a96" stroke-width="1"/><line x1="466.79" y1="417.70" x2="466.79" y2="419.90" stroke="#1a5a96" stroke-width="1"/><line x1="472.73" y1="417.70" x2="472.73" y2="419.90" stroke="#1a5a96" stroke-width="1"/><line x1="478.66" y1="417.70" x2="478.66" y2="419.90" stroke="#1a5a96" stroke-width="1"/><line x1="484.60" y1="417.70" x2="484.60" y2="419.90" stroke="#1a5a96" stroke-width="1"/><line x1="490.53" y1="417.70" x2="490.53" y2="419.90" stroke="#1a5a96" stroke-width="1"/><line x1="496.46" y1="417.70" x2="496.46" y2="419.90" stroke="#1a5a96" stroke-width="1"/><line x1="502.40" y1="417.70" x2="502.40" y2="419.90" stroke="#1a5a96" stroke-width="1"/><line x1="508.33" y1="417.70" x2="508.33" y2="419.90" stroke="#1a5a96" stroke-width="1"/><line x1="514.27" y1="417.70" x2="514.27" y2="419.90" stroke="#1a5a96" stroke-width="1"/><line x1="520.20" y1="417.70" x2="520.20" y2="419.90" stroke="#1a5a96" stroke-width="1"/><line x1="526.14" y1="417.70" x2="526.14" y2="419.90" stroke="#1a5a96" stroke-width="1"/><line x1="532.08" y1="417.70" x2="532.08" y2="419.90" stroke="#1a5a96" stroke-width="1"/><line x1="538.01" y1="417.70" x2="538.01" y2="419.90" stroke="#1a5a96" stroke-width="1"/><line x1="543.94" y1="417.70" x2="543.94" y2="419.90" stroke="#1a5a96" stroke-width="1"/><line x1="549.88" y1="417.70" x2="549.88" y2="419.90" stroke="#1a5a96" stroke-width="1"/><line x1="555.82" y1="417.70" x2="555.82" y2="419.90" stroke="#1a5a96" stroke-width="1"/><line x1="561.75" y1="417.70" x2="561.75" y2="419.90" stroke="#1a5a96" stroke-width="1"/><line x1="567.68" y1="417.70" x2="567.68" y2="419.90" stroke="#1a5a96" stroke-width="1"/><line x1="573.62" y1="417.70" x2="573.62" y2="419.90" stroke="#1a5a96" stroke-width="1"/><line x1="579.56" y1="417.70" x2="579.56" y2="419.90" stroke="#1a5a96" stroke-width="1"/><line x1="585.49" y1="417.70" x2="585.49" y2="419.90" stroke="#1a5a96" stroke-width="1"/><line x1="591.42" y1="417.70" x2="591.42" y2="419.90" stroke="#1a5a96" stroke-width="1"/><line x1="597.36" y1="417.70" x2="597.36" y2="419.90" stroke="#1a5a96" stroke-width="1"/><line x1="603.29" y1="417.70" x2="603.29" y2="419.90" stroke="#1a5a96" stroke-width="1"/><line x1="609.23" y1="417.70" x2="609.23" y2="419.90" stroke="#1a5a96" stroke-width="1"/><line x1="615.16" y1="417.70" x2="615.16" y2="419.90" stroke="#1a5a96" stroke-width="1"/></svg>
<div class="t" style="left:153.30px;width:200px;text-align:center;top:414px;font-size:7.0px;color:#e2e2e2;font-weight:normal;">0</div>
<div class="t" style="left:153.30px;width:200px;text-align:center;top:402px;font-size:7.0px;color:#e2e2e2;font-weight:normal;">2 Gi</div>
<div class="t" style="left:153.30px;width:200px;text-align:center;top:391px;font-size:7.0px;color:#e2e2e2;font-weight:normal;">4 Gi</div>
<div class="t" style="left:153.30px;width:200px;text-align:center;top:379px;font-size:7.0px;color:#e2e2e2;font-weight:normal;">6 Gi</div>
<div class="t" style="left:153.30px;width:200px;text-align:center;top:368px;font-size:7.0px;color:#e2e2e2;font-weight:normal;">8 Gi</div>
<div class="t" style="left:153.30px;width:200px;text-align:center;top:357px;font-size:7.0px;color:#e2e2e2;font-weight:normal;">10 Gi</div>
<div class="t" style="left:153.30px;width:200px;text-align:center;top:345px;font-size:7.0px;color:#e2e2e2;font-weight:normal;">12 Gi</div>
<div class="t" style="left:153.30px;width:200px;text-align:center;top:334px;font-size:7.0px;color:#e2e2e2;font-weight:normal;">14 Gi</div>
<div class="t" style="left:153.30px;width:200px;text-align:center;top:322px;font-size:7.0px;color:#e2e2e2;font-weight:normal;">16 Gi</div>
<div class="t" style="left:153.30px;width:200px;text-align:center;top:311px;font-size:7.0px;color:#e2e2e2;font-weight:normal;">18 Gi</div>
<div class="t" style="left:153.30px;width:200px;text-align:center;top:300px;font-size:7.0px;color:#e2e2e2;font-weight:normal;">20 Gi</div>
<div class="t" style="left:153.30px;width:200px;text-align:center;top:288px;font-size:7.0px;color:#e2e2e2;font-weight:normal;">22 Gi</div>
<div class="t" style="left:153.30px;width:200px;text-align:center;top:277px;font-size:7.0px;color:#e2e2e2;font-weight:normal;">24 Gi</div>
<div class="t" style="left:166.00px;width:200px;text-align:center;top:423px;font-size:6.9px;color:#e2e2e2;font-weight:normal;">2025-12-06</div>
<div class="t" style="left:166.00px;width:200px;text-align:center;top:432px;font-size:6.9px;color:#e2e2e2;font-weight:normal;">06:55:00</div>
<div class="t" style="left:207.55px;width:200px;text-align:center;top:423px;font-size:6.9px;color:#e2e2e2;font-weight:normal;">2025-12-06</div>
<div class="t" style="left:207.55px;width:200px;text-align:center;top:432px;font-size:6.9px;color:#e2e2e2;font-weight:normal;">07:02:00</div>
<div class="t" style="left:249.09px;width:200px;text-align:center;top:423px;font-size:6.9px;color:#e2e2e2;font-weight:normal;">2025-12-06</div>
<div class="t" style="left:249.09px;width:200px;text-align:center;top:432px;font-size:6.9px;color:#e2e2e2;font-weight:normal;">07:09:00</div>
<div class="t" style="left:290.63px;width:200px;text-align:center;top:423px;font-size:6.9px;color:#e2e2e2;font-weight:normal;">2025-12-06</div>
<div class="t" style="left:290.63px;width:200px;text-align:center;top:432px;font-size:6.9px;color:#e2e2e2;font-weight:normal;">07:16:00</div>
<div class="t" style="left:332.18px;width:200px;text-align:center;top:423px;font-size:6.9px;color:#e2e2e2;font-weight:normal;">2025-12-06</div>
<div class="t" style="left:332.18px;width:200px;text-align:center;top:432px;font-size:6.9px;color:#e2e2e2;font-weight:normal;">07:23:00</div>
<div class="t" style="left:373.73px;width:200px;text-align:center;top:423px;font-size:6.9px;color:#e2e2e2;font-weight:normal;">2025-12-06</div>
<div class="t" style="left:373.73px;width:200px;text-align:center;top:432px;font-size:6.9px;color:#e2e2e2;font-weight:normal;">07:30:00</div>
<div class="t" style="left:415.27px;width:200px;text-align:center;top:423px;font-size:6.9px;color:#e2e2e2;font-weight:normal;">2025-12-06</div>
<div class="t" style="left:415.27px;width:200px;text-align:center;top:432px;font-size:6.9px;color:#e2e2e2;font-weight:normal;">07:37:00</div>
<div class="t" style="left:456.82px;width:200px;text-align:center;top:423px;font-size:6.9px;color:#e2e2e2;font-weight:normal;">2025-12-06</div>
<div class="t" style="left:456.82px;width:200px;text-align:center;top:432px;font-size:6.9px;color:#e2e2e2;font-weight:normal;">07:44:00</div>
<div class="t" style="left:498.36px;width:200px;text-align:center;top:423px;font-size:6.9px;color:#e2e2e2;font-weight:normal;">2025-12-06</div>
<div class="t" style="left:498.36px;width:200px;text-align:center;top:432px;font-size:6.9px;color:#e2e2e2;font-weight:normal;">07:51:00</div>
<div class="t" style="left:219.8px;top:345.8px;width:40px;text-align:center;font-size:8.2px;line-height:8px;color:#e2e2e2;font-weight:normal;-webkit-text-stroke:0.2px currentColor;transform:rotate(-90deg);">Bytes</div>
<svg class="r" style="left:0;top:0" width="1024" height="490"><line x1="651.4" y1="417.20" x2="1012.18" y2="417.20" stroke="#373737" stroke-width="1"/><line x1="651.4" y1="394.55" x2="1012.18" y2="394.55" stroke="#373737" stroke-width="1"/><line x1="651.4" y1="371.90" x2="1012.18" y2="371.90" stroke="#373737" stroke-width="1"/><line x1="651.4" y1="349.25" x2="1012.18" y2="349.25" stroke="#373737" stroke-width="1"/><line x1="651.4" y1="326.60" x2="1012.18" y2="326.60" stroke="#373737" stroke-width="1"/><line x1="651.4" y1="303.95" x2="1012.18" y2="303.95" stroke="#373737" stroke-width="1"/><line x1="651.4" y1="281.30" x2="1012.18" y2="281.30" stroke="#373737" stroke-width="1"/><line x1="657.51" y1="281.30" x2="657.51" y2="417.20" stroke="#373737" stroke-width="1"/><line x1="663.63" y1="281.30" x2="663.63" y2="417.20" stroke="#373737" stroke-width="1"/><line x1="669.75" y1="281.30" x2="669.75" y2="417.20" stroke="#373737" stroke-width="1"/><line x1="675.86" y1="281.30" x2="675.86" y2="417.20" stroke="#373737" stroke-width="1"/><line x1="681.98" y1="281.30" x2="681.98" y2="417.20" stroke="#373737" stroke-width="1"/><line x1="688.09" y1="281.30" x2="688.09" y2="417.20" stroke="#373737" stroke-width="1"/><line x1="694.20" y1="281.30" x2="694.20" y2="417.20" stroke="#373737" stroke-width="1"/><line x1="700.32" y1="281.30" x2="700.32" y2="417.20" stroke="#373737" stroke-width="1"/><line x1="706.43" y1="281.30" x2="706.43" y2="417.20" stroke="#373737" stroke-width="1"/><line x1="712.55" y1="281.30" x2="712.55" y2="417.20" stroke="#373737" stroke-width="1"/><line x1="718.66" y1="281.30" x2="718.66" y2="417.20" stroke="#373737" stroke-width="1"/><line x1="724.78" y1="281.30" x2="724.78" y2="417.20" stroke="#373737" stroke-width="1"/><line x1="730.89" y1="281.30" x2="730.89" y2="417.20" stroke="#373737" stroke-width="1"/><line x1="737.01" y1="281.30" x2="737.01" y2="417.20" stroke="#373737" stroke-width="1"/><line x1="743.12" y1="281.30" x2="743.12" y2="417.20" stroke="#373737" stroke-width="1"/><line x1="749.24" y1="281.30" x2="749.24" y2="417.20" stroke="#373737" stroke-width="1"/><line x1="755.36" y1="281.30" x2="755.36" y2="417.20" stroke="#373737" stroke-width="1"/><line x1="761.47" y1="281.30" x2="761.47" y2="417.20" stroke="#373737" stroke-width="1"/><line x1="767.59" y1="281.30" x2="767.59" y2="417.20" stroke="#373737" stroke-width="1"/><line x1="773.70" y1="281.30" x2="773.70" y2="417.20" stroke="#373737" stroke-width="1"/><line x1="779.81" y1="281.30" x2="779.81" y2="417.20" stroke="#373737" stroke-width="1"/><line x1="785.93" y1="281.30" x2="785.93" y2="417.20" stroke="#373737" stroke-width="1"/><line x1="792.04" y1="281.30" x2="792.04" y2="417.20" stroke="#373737" stroke-width="1"/><line x1="798.16" y1="281.30" x2="798.16" y2="417.20" stroke="#373737" stroke-width="1"/><line x1="804.27" y1="281.30" x2="804.27" y2="417.20" stroke="#373737" stroke-width="1"/><line x1="810.39" y1="281.30" x2="810.39" y2="417.20" stroke="#373737" stroke-width="1"/><line x1="816.50" y1="281.30" x2="816.50" y2="417.20" stroke="#373737" stroke-width="1"/><line x1="822.62" y1="281.30" x2="822.62" y2="417.20" stroke="#373737" stroke-width="1"/><line x1="828.74" y1="281.30" x2="828.74" y2="417.20" stroke="#373737" stroke-width="1"/><line x1="834.85" y1="281.30" x2="834.85" y2="417.20" stroke="#373737" stroke-width="1"/><line x1="840.96" y1="281.30" x2="840.96" y2="417.20" stroke="#373737" stroke-width="1"/><line x1="847.08" y1="281.30" x2="847.08" y2="417.20" stroke="#373737" stroke-width="1"/><line x1="853.19" y1="281.30" x2="853.19" y2="417.20" stroke="#373737" stroke-width="1"/><line x1="859.31" y1="281.30" x2="859.31" y2="417.20" stroke="#373737" stroke-width="1"/><line x1="865.42" y1="281.30" x2="865.42" y2="417.20" stroke="#373737" stroke-width="1"/><line x1="871.54" y1="281.30" x2="871.54" y2="417.20" stroke="#373737" stroke-width="1"/><line x1="877.65" y1="281.30" x2="877.65" y2="417.20" stroke="#373737" stroke-width="1"/><line x1="883.77" y1="281.30" x2="883.77" y2="417.20" stroke="#373737" stroke-width="1"/><line x1="889.88" y1="281.30" x2="889.88" y2="417.20" stroke="#373737" stroke-width="1"/><line x1="896.00" y1="281.30" x2="896.00" y2="417.20" stroke="#373737" stroke-width="1"/><line x1="902.12" y1="281.30" x2="902.12" y2="417.20" stroke="#373737" stroke-width="1"/><line x1="908.23" y1="281.30" x2="908.23" y2="417.20" stroke="#373737" stroke-width="1"/><line x1="914.35" y1="281.30" x2="914.35" y2="417.20" stroke="#373737" stroke-width="1"/><line x1="920.46" y1="281.30" x2="920.46" y2="417.20" stroke="#373737" stroke-width="1"/><line x1="926.58" y1="281.30" x2="926.58" y2="417.20" stroke="#373737" stroke-width="1"/><line x1="932.69" y1="281.30" x2="932.69" y2="417.20" stroke="#373737" stroke-width="1"/><line x1="938.81" y1="281.30" x2="938.81" y2="417.20" stroke="#373737" stroke-width="1"/><line x1="944.92" y1="281.30" x2="944.92" y2="417.20" stroke="#373737" stroke-width="1"/><line x1="951.03" y1="281.30" x2="951.03" y2="417.20" stroke="#373737" stroke-width="1"/><line x1="957.15" y1="281.30" x2="957.15" y2="417.20" stroke="#373737" stroke-width="1"/><line x1="963.26" y1="281.30" x2="963.26" y2="417.20" stroke="#373737" stroke-width="1"/><line x1="969.38" y1="281.30" x2="969.38" y2="417.20" stroke="#373737" stroke-width="1"/><line x1="975.50" y1="281.30" x2="975.50" y2="417.20" stroke="#373737" stroke-width="1"/><line x1="981.61" y1="281.30" x2="981.61" y2="417.20" stroke="#373737" stroke-width="1"/><line x1="987.72" y1="281.30" x2="987.72" y2="417.20" stroke="#373737" stroke-width="1"/><line x1="993.84" y1="281.30" x2="993.84" y2="417.20" stroke="#373737" stroke-width="1"/><line x1="999.95" y1="281.30" x2="999.95" y2="417.20" stroke="#373737" stroke-width="1"/><line x1="1006.07" y1="281.30" x2="1006.07" y2="417.20" stroke="#373737" stroke-width="1"/><line x1="1012.18" y1="281.30" x2="1012.18" y2="417.20" stroke="#373737" stroke-width="1"/><polygon points="651.40,417.20 651.40,417.20 657.51,417.20 663.63,417.20 669.75,417.20 675.86,417.20 681.98,417.20 688.09,417.20 694.20,417.20 700.32,417.20 706.43,417.20 712.55,417.20 718.66,417.20 724.78,417.20 730.89,417.20 737.01,417.20 743.12,417.20 749.24,417.20 755.36,417.20 761.47,417.20 767.59,417.20 773.70,417.20 779.81,417.20 785.93,417.20 792.04,417.20 798.16,417.20 804.27,417.20 810.39,417.20 816.50,417.20 822.62,417.20 828.74,417.20 834.85,417.20 840.96,417.20 847.08,417.20 853.19,417.20 859.31,417.20 865.42,417.20 871.54,417.20 877.65,417.20 883.77,417.20 889.88,417.20 896.00,414.21 902.12,407.42 908.23,396.81 914.35,281.89 920.46,382.91 926.58,392.10 932.69,395.18 938.81,373.12 944.92,394.60 951.03,394.55 957.15,394.55 963.26,392.10 969.38,396.09 975.50,395.91 981.61,396.68 987.72,393.60 987.72,417.20" fill="#778919" fill-opacity="0.85"/><polygon points="1006.07,417.20 1006.07,373.80 1012.18,396.68 1012.18,417.20" fill="#778919" fill-opacity="0.85"/><polygon points="651.40,417.20 651.40,417.20 657.51,417.20 663.63,417.20 669.75,417.20 675.86,417.20 681.98,417.20 688.09,417.20 694.20,417.20 700.32,417.20 706.43,417.20 712.55,417.20 718.66,417.20 724.78,417.20 730.89,417.20 737.01,417.20 743.12,417.20 749.24,417.20 755.36,417.20 761.47,417.20 767.59,417.20 773.70,417.20 779.81,417.20 785.93,417.20 792.04,417.20 798.16,417.20 804.27,417.20 810.39,417.20 816.50,417.20 822.62,417.20 828.74,417.20 834.85,417.20 840.96,417.20 847.08,417.20 853.19,417.20 859.31,417.20 865.42,417.20 871.54,417.20 877.65,417.20 883.77,417.20 889.88,417.20 896.00,416.75 902.12,415.12 908.23,404.38 914.35,344.72 920.46,408.91 926.58,411.99 932.69,416.61 938.81,373.12 944.92,402.79 951.03,415.12 957.15,415.84 963.26,416.29 969.38,415.84 975.50,415.12 981.61,416.61 987.72,415.12 987.72,417.20" fill="#2c677c" fill-opacity="0.85"/><polygon points="1006.07,417.20 1006.07,406.78 1012.18,416.75 1012.18,417.20" fill="#2c677c" fill-opacity="0.85"/><line x1="651.4" y1="417.20" x2="1012.18" y2="417.20" stroke="#fff" stroke-opacity="0.04" stroke-width="1"/><line x1="651.4" y1="394.55" x2="1012.18" y2="394.55" stroke="#fff" stroke-opacity="0.04" stroke-width="1"/><line x1="651.4" y1="371.90" x2="1012.18" y2="371.90" stroke="#fff" stroke-opacity="0.04" stroke-width="1"/><line x1="651.4" y1="349.25" x2="1012.18" y2="349.25" stroke="#fff" stroke-opacity="0.04" stroke-width="1"/><line x1="651.4" y1="326.60" x2="1012.18" y2="326.60" stroke="#fff" stroke-opacity="0.04" stroke-width="1"/><line x1="651.4" y1="303.95" x2="1012.18" y2="303.95" stroke="#fff" stroke-opacity="0.04" stroke-width="1"/><line x1="651.4" y1="281.30" x2="1012.18" y2="281.30" stroke="#fff" stroke-opacity="0.04" stroke-width="1"/><line x1="657.51" y1="281.30" x2="657.51" y2="417.20" stroke="#fff" stroke-opacity="0.04" stroke-width="1"/><line x1="663.63" y1="281.30" x2="663.63" y2="417.20" stroke="#fff" stroke-opacity="0.04" stroke-width="1"/><line x1="669.75" y1="281.30" x2="669.75" y2="417.20" stroke="#fff" stroke-opacity="0.04" stroke-width="1"/><line x1="675.86" y1="281.30" x2="675.86" y2="417.20" stroke="#fff" stroke-opacity="0.04" stroke-width="1"/><line x1="681.98" y1="281.30" x2="681.98" y2="417.20" stroke="#fff" stroke-opacity="0.04" stroke-width="1"/><line x1="688.09" y1="281.30" x2="688.09" y2="417.20" stroke="#fff" stroke-opacity="0.04" stroke-width="1"/><line x1="694.20" y1="281.30" x2="694.20" y2="417.20" stroke="#fff" stroke-opacity="0.04" stroke-width="1"/><line x1="700.32" y1="281.30" x2="700.32" y2="417.20" stroke="#fff" stroke-opacity="0.04" stroke-width="1"/><line x1="706.43" y1="281.30" x2="706.43" y2="417.20" stroke="#fff" stroke-opacity="0.04" stroke-width="1"/><line x1="712.55" y1="281.30" x2="712.55" y2="417.20" stroke="#fff" stroke-opacity="0.04" stroke-width="1"/><line x1="718.66" y1="281.30" x2="718.66" y2="417.20" stroke="#fff" stroke-opacity="0.04" stroke-width="1"/><line x1="724.78" y1="281.30" x2="724.78" y2="417.20" stroke="#fff" stroke-opacity="0.04" stroke-width="1"/><line x1="730.89" y1="281.30" x2="730.89" y2="417.20" stroke="#fff" stroke-opacity="0.04" stroke-width="1"/><line x1="737.01" y1="281.30" x2="737.01" y2="417.20" stroke="#fff" stroke-opacity="0.04" stroke-width="1"/><line x1="743.12" y1="281.30" x2="743.12" y2="417.20" stroke="#fff" stroke-opacity="0.04" stroke-width="1"/><line x1="749.24" y1="281.30" x2="749.24" y2="417.20" stroke="#fff" stroke-opacity="0.04" stroke-width="1"/><line x1="755.36" y1="281.30" x2="755.36" y2="417.20" stroke="#fff" stroke-opacity="0.04" stroke-width="1"/><line x1="761.47" y1="281.30" x2="761.47" y2="417.20" stroke="#fff" stroke-opacity="0.04" stroke-width="1"/><line x1="767.59" y1="281.30" x2="767.59" y2="417.20" stroke="#fff" stroke-opacity="0.04" stroke-width="1"/><line x1="773.70" y1="281.30" x2="773.70" y2="417.20" stroke="#fff" stroke-opacity="0.04" stroke-width="1"/><line x1="779.81" y1="281.30" x2="779.81" y2="417.20" stroke="#fff" stroke-opacity="0.04" stroke-width="1"/><line x1="785.93" y1="281.30" x2="785.93" y2="417.20" stroke="#fff" stroke-opacity="0.04" stroke-width="1"/><line x1="792.04" y1="281.30" x2="792.04" y2="417.20" stroke="#fff" stroke-opacity="0.04" stroke-width="1"/><line x1="798.16" y1="281.30" x2="798.16" y2="417.20" stroke="#fff" stroke-opacity="0.04" stroke-width="1"/><line x1="804.27" y1="281.30" x2="804.27" y2="417.20" stroke="#fff" stroke-opacity="0.04" stroke-width="1"/><line x1="810.39" y1="281.30" x2="810.39" y2="417.20" stroke="#fff" stroke-opacity="0.04" stroke-width="1"/><line x1="816.50" y1="281.30" x2="816.50" y2="417.20" stroke="#fff" stroke-opacity="0.04" stroke-width="1"/><line x1="822.62" y1="281.30" x2="822.62" y2="417.20" stroke="#fff" stroke-opacity="0.04" stroke-width="1"/><line x1="828.74" y1="281.30" x2="828.74" y2="417.20" stroke="#fff" stroke-opacity="0.04" stroke-width="1"/><line x1="834.85" y1="281.30" x2="834.85" y2="417.20" stroke="#fff" stroke-opacity="0.04" stroke-width="1"/><line x1="840.96" y1="281.30" x2="840.96" y2="417.20" stroke="#fff" stroke-opacity="0.04" stroke-width="1"/><line x1="847.08" y1="281.30" x2="847.08" y2="417.20" stroke="#fff" stroke-opacity="0.04" stroke-width="1"/><line x1="853.19" y1="281.30" x2="853.19" y2="417.20" stroke="#fff" stroke-opacity="0.04" stroke-width="1"/><line x1="859.31" y1="281.30" x2="859.31" y2="417.20" stroke="#fff" stroke-opacity="0.04" stroke-width="1"/><line x1="865.42" y1="281.30" x2="865.42" y2="417.20" stroke="#fff" stroke-opacity="0.04" stroke-width="1"/><line x1="871.54" y1="281.30" x2="871.54" y2="417.20" stroke="#fff" stroke-opacity="0.04" stroke-width="1"/><line x1="877.65" y1="281.30" x2="877.65" y2="417.20" stroke="#fff" stroke-opacity="0.04" stroke-width="1"/><line x1="883.77" y1="281.30" x2="883.77" y2="417.20" stroke="#fff" stroke-opacity="0.04" stroke-width="1"/><line x1="889.88" y1="281.30" x2="889.88" y2="417.20" stroke="#fff" stroke-opacity="0.04" stroke-width="1"/><line x1="896.00" y1="281.30" x2="896.00" y2="417.20" stroke="#fff" stroke-opacity="0.04" stroke-width="1"/><line x1="902.12" y1="281.30" x2="902.12" y2="417.20" stroke="#fff" stroke-opacity="0.04" stroke-width="1"/><line x1="908.23" y1="281.30" x2="908.23" y2="417.20" stroke="#fff" stroke-opacity="0.04" stroke-width="1"/><line x1="914.35" y1="281.30" x2="914.35" y2="417.20" stroke="#fff" stroke-opacity="0.04" stroke-width="1"/><line x1="920.46" y1="281.30" x2="920.46" y2="417.20" stroke="#fff" stroke-opacity="0.04" stroke-width="1"/><line x1="926.58" y1="281.30" x2="926.58" y2="417.20" stroke="#fff" stroke-opacity="0.04" stroke-width="1"/><line x1="932.69" y1="281.30" x2="932.69" y2="417.20" stroke="#fff" stroke-opacity="0.04" stroke-width="1"/><line x1="938.81" y1="281.30" x2="938.81" y2="417.20" stroke="#fff" stroke-opacity="0.04" stroke-width="1"/><line x1="944.92" y1="281.30" x2="944.92" y2="417.20" stroke="#fff" stroke-opacity="0.04" stroke-width="1"/><line x1="951.03" y1="281.30" x2="951.03" y2="417.20" stroke="#fff" stroke-opacity="0.04" stroke-width="1"/><line x1="957.15" y1="281.30" x2="957.15" y2="417.20" stroke="#fff" stroke-opacity="0.04" stroke-width="1"/><line x1="963.26" y1="281.30" x2="963.26" y2="417.20" stroke="#fff" stroke-opacity="0.04" stroke-width="1"/><line x1="969.38" y1="281.30" x2="969.38" y2="417.20" stroke="#fff" stroke-opacity="0.04" stroke-width="1"/><line x1="975.50" y1="281.30" x2="975.50" y2="417.20" stroke="#fff" stroke-opacity="0.04" stroke-width="1"/><line x1="981.61" y1="281.30" x2="981.61" y2="417.20" stroke="#fff" stroke-opacity="0.04" stroke-width="1"/><line x1="987.72" y1="281.30" x2="987.72" y2="417.20" stroke="#fff" stroke-opacity="0.04" stroke-width="1"/><line x1="993.84" y1="281.30" x2="993.84" y2="417.20" stroke="#fff" stroke-opacity="0.04" stroke-width="1"/><line x1="999.95" y1="281.30" x2="999.95" y2="417.20" stroke="#fff" stroke-opacity="0.04" stroke-width="1"/><line x1="1006.07" y1="281.30" x2="1006.07" y2="417.20" stroke="#fff" stroke-opacity="0.04" stroke-width="1"/><line x1="1012.18" y1="281.30" x2="1012.18" y2="417.20" stroke="#fff" stroke-opacity="0.04" stroke-width="1"/><line x1="651.4" y1="281.30" x2="651.4" y2="417.20" stroke="#1a5a96" stroke-width="1"/><line x1="651.4" y1="417.20" x2="1012.18" y2="417.20" stroke="#1a5a96" stroke-width="1"/><line x1="649.1999999999999" y1="417.20" x2="651.4" y2="417.20" stroke="#1a5a96" stroke-width="1"/><line x1="649.1999999999999" y1="394.55" x2="651.4" y2="394.55" stroke="#1a5a96" stroke-width="1"/><line x1="649.1999999999999" y1="371.90" x2="651.4" y2="371.90" stroke="#1a5a96" stroke-width="1"/><line x1="649.1999999999999" y1="349.25" x2="651.4" y2="349.25" stroke="#1a5a96" stroke-width="1"/><line x1="649.1999999999999" y1="326.60" x2="651.4" y2="326.60" stroke="#1a5a96" stroke-width="1"/><line x1="649.1999999999999" y1="303.95" x2="651.4" y2="303.95" stroke="#1a5a96" stroke-width="1"/><line x1="649.1999999999999" y1="281.30" x2="651.4" y2="281.30" stroke="#1a5a96" stroke-width="1"/><line x1="651.40" y1="417.20" x2="651.40" y2="419.40" stroke="#1a5a96" stroke-width="1"/><line x1="657.51" y1="417.20" x2="657.51" y2="419.40" stroke="#1a5a96" stroke-width="1"/><line x1="663.63" y1="417.20" x2="663.63" y2="419.40" stroke="#1a5a96" stroke-width="1"/><line x1="669.75" y1="417.20" x2="669.75" y2="419.40" stroke="#1a5a96" stroke-width="1"/><line x1="675.86" y1="417.20" x2="675.86" y2="419.40" stroke="#1a5a96" stroke-width="1"/><line x1="681.98" y1="417.20" x2="681.98" y2="419.40" stroke="#1a5a96" stroke-width="1"/><line x1="688.09" y1="417.20" x2="688.09" y2="419.40" stroke="#1a5a96" stroke-width="1"/><line x1="694.20" y1="417.20" x2="694.20" y2="419.40" stroke="#1a5a96" stroke-width="1"/><line x1="700.32" y1="417.20" x2="700.32" y2="419.40" stroke="#1a5a96" stroke-width="1"/><line x1="706.43" y1="417.20" x2="706.43" y2="419.40" stroke="#1a5a96" stroke-width="1"/><line x1="712.55" y1="417.20" x2="712.55" y2="419.40" stroke="#1a5a96" stroke-width="1"/><line x1="718.66" y1="417.20" x2="718.66" y2="419.40" stroke="#1a5a96" stroke-width="1"/><line x1="724.78" y1="417.20" x2="724.78" y2="419.40" stroke="#1a5a96" stroke-width="1"/><line x1="730.89" y1="417.20" x2="730.89" y2="419.40" stroke="#1a5a96" stroke-width="1"/><line x1="737.01" y1="417.20" x2="737.01" y2="419.40" stroke="#1a5a96" stroke-width="1"/><line x1="743.12" y1="417.20" x2="743.12" y2="419.40" stroke="#1a5a96" stroke-width="1"/><line x1="749.24" y1="417.20" x2="749.24" y2="419.40" stroke="#1a5a96" stroke-width="1"/><line x1="755.36" y1="417.20" x2="755.36" y2="419.40" stroke="#1a5a96" stroke-width="1"/><line x1="761.47" y1="417.20" x2="761.47" y2="419.40" stroke="#1a5a96" stroke-width="1"/><line x1="767.59" y1="417.20" x2="767.59" y2="419.40" stroke="#1a5a96" stroke-width="1"/><line x1="773.70" y1="417.20" x2="773.70" y2="419.40" stroke="#1a5a96" stroke-width="1"/><line x1="779.81" y1="417.20" x2="779.81" y2="419.40" stroke="#1a5a96" stroke-width="1"/><line x1="785.93" y1="417.20" x2="785.93" y2="419.40" stroke="#1a5a96" stroke-width="1"/><line x1="792.04" y1="417.20" x2="792.04" y2="419.40" stroke="#1a5a96" stroke-width="1"/><line x1="798.16" y1="417.20" x2="798.16" y2="419.40" stroke="#1a5a96" stroke-width="1"/><line x1="804.27" y1="417.20" x2="804.27" y2="419.40" stroke="#1a5a96" stroke-width="1"/><line x1="810.39" y1="417.20" x2="810.39" y2="419.40" stroke="#1a5a96" stroke-width="1"/><line x1="816.50" y1="417.20" x2="816.50" y2="419.40" stroke="#1a5a96" stroke-width="1"/><line x1="822.62" y1="417.20" x2="822.62" y2="419.40" stroke="#1a5a96" stroke-width="1"/><line x1="828.74" y1="417.20" x2="828.74" y2="419.40" stroke="#1a5a96" stroke-width="1"/><line x1="834.85" y1="417.20" x2="834.85" y2="419.40" stroke="#1a5a96" stroke-width="1"/><line x1="840.96" y1="417.20" x2="840.96" y2="419.40" stroke="#1a5a96" stroke-width="1"/><line x1="847.08" y1="417.20" x2="847.08" y2="419.40" stroke="#1a5a96" stroke-width="1"/><line x1="853.19" y1="417.20" x2="853.19" y2="419.40" stroke="#1a5a96" stroke-width="1"/><line x1="859.31" y1="417.20" x2="859.31" y2="419.40" stroke="#1a5a96" stroke-width="1"/><line x1="865.42" y1="417.20" x2="865.42" y2="419.40" stroke="#1a5a96" stroke-width="1"/><line x1="871.54" y1="417.20" x2="871.54" y2="419.40" stroke="#1a5a96" stroke-width="1"/><line x1="877.65" y1="417.20" x2="877.65" y2="419.40" stroke="#1a5a96" stroke-width="1"/><line x1="883.77" y1="417.20" x2="883.77" y2="419.40" stroke="#1a5a96" stroke-width="1"/><line x1="889.88" y1="417.20" x2="889.88" y2="419.40" stroke="#1a5a96" stroke-width="1"/><line x1="896.00" y1="417.20" x2="896.00" y2="419.40" stroke="#1a5a96" stroke-width="1"/><line x1="902.12" y1="417.20" x2="902.12" y2="419.40" stroke="#1a5a96" stroke-width="1"/><line x1="908.23" y1="417.20" x2="908.23" y2="419.40" stroke="#1a5a96" stroke-width="1"/><line x1="914.35" y1="417.20" x2="914.35" y2="419.40" stroke="#1a5a96" stroke-width="1"/><line x1="920.46" y1="417.20" x2="920.46" y2="419.40" stroke="#1a5a96" stroke-width="1"/><line x1="926.58" y1="417.20" x2="926.58" y2="419.40" stroke="#1a5a96" stroke-width="1"/><line x1="932.69" y1="417.20" x2="932.69" y2="419.40" stroke="#1a5a96" stroke-width="1"/><line x1="938.81" y1="417.20" x2="938.81" y2="419.40" stroke="#1a5a96" stroke-width="1"/><line x1="944.92" y1="417.20" x2="944.92" y2="419.40" stroke="#1a5a96" stroke-width="1"/><line x1="951.03" y1="417.20" x2="951.03" y2="419.40" stroke="#1a5a96" stroke-width="1"/><line x1="957.15" y1="417.20" x2="957.15" y2="419.40" stroke="#1a5a96" stroke-width="1"/><line x1="963.26" y1="417.20" x2="963.26" y2="419.40" stroke="#1a5a96" stroke-width="1"/><line x1="969.38" y1="417.20" x2="969.38" y2="419.40" stroke="#1a5a96" stroke-width="1"/><line x1="975.50" y1="417.20" x2="975.50" y2="419.40" stroke="#1a5a96" stroke-width="1"/><line x1="981.61" y1="417.20" x2="981.61" y2="419.40" stroke="#1a5a96" stroke-width="1"/><line x1="987.72" y1="417.20" x2="987.72" y2="419.40" stroke="#1a5a96" stroke-width="1"/><line x1="993.84" y1="417.20" x2="993.84" y2="419.40" stroke="#1a5a96" stroke-width="1"/><line x1="999.95" y1="417.20" x2="999.95" y2="419.40" stroke="#1a5a96" stroke-width="1"/><line x1="1006.07" y1="417.20" x2="1006.07" y2="419.40" stroke="#1a5a96" stroke-width="1"/><line x1="1012.18" y1="417.20" x2="1012.18" y2="419.40" stroke="#1a5a96" stroke-width="1"/></svg>
<div class="t" style="left:539.50px;width:200px;text-align:center;top:413px;font-size:7.0px;color:#e2e2e2;font-weight:normal;">0</div>
<div class="t" style="left:539.50px;width:200px;text-align:center;top:390px;font-size:7.0px;color:#e2e2e2;font-weight:normal;">500</div>
<div class="t" style="left:539.50px;width:200px;text-align:center;top:368px;font-size:7.0px;color:#e2e2e2;font-weight:normal;">1 k</div>
<div class="t" style="left:539.50px;width:200px;text-align:center;top:345px;font-size:7.0px;color:#e2e2e2;font-weight:normal;">1.5 k</div>
<div class="t" style="left:539.50px;width:200px;text-align:center;top:322px;font-size:7.0px;color:#e2e2e2;font-weight:normal;">2 k</div>
<div class="t" style="left:539.50px;width:200px;text-align:center;top:300px;font-size:7.0px;color:#e2e2e2;font-weight:normal;">2.5 k</div>
<div class="t" style="left:539.50px;width:200px;text-align:center;top:277px;font-size:7.0px;color:#e2e2e2;font-weight:normal;">3 k</div>
<div class="t" style="left:552.40px;width:200px;text-align:center;top:423px;font-size:6.9px;color:#e2e2e2;font-weight:normal;">2025-12-06</div>
<div class="t" style="left:552.40px;width:200px;text-align:center;top:432px;font-size:6.9px;color:#e2e2e2;font-weight:normal;">06:55:00</div>
<div class="t" style="left:595.20px;width:200px;text-align:center;top:423px;font-size:6.9px;color:#e2e2e2;font-weight:normal;">2025-12-06</div>
<div class="t" style="left:595.20px;width:200px;text-align:center;top:432px;font-size:6.9px;color:#e2e2e2;font-weight:normal;">07:02:00</div>
<div class="t" style="left:638.01px;width:200px;text-align:center;top:423px;font-size:6.9px;color:#e2e2e2;font-weight:normal;">2025-12-06</div>
<div class="t" style="left:638.01px;width:200px;text-align:center;top:432px;font-size:6.9px;color:#e2e2e2;font-weight:normal;">07:09:00</div>
<div class="t" style="left:680.81px;width:200px;text-align:center;top:423px;font-size:6.9px;color:#e2e2e2;font-weight:normal;">2025-12-06</div>
<div class="t" style="left:680.81px;width:200px;text-align:center;top:432px;font-size:6.9px;color:#e2e2e2;font-weight:normal;">07:16:00</div>
<div class="t" style="left:723.62px;width:200px;text-align:center;top:423px;font-size:6.9px;color:#e2e2e2;font-weight:normal;">2025-12-06</div>
<div class="t" style="left:723.62px;width:200px;text-align:center;top:432px;font-size:6.9px;color:#e2e2e2;font-weight:normal;">07:23:00</div>
<div class="t" style="left:766.42px;width:200px;text-align:center;top:423px;font-size:6.9px;color:#e2e2e2;font-weight:normal;">2025-12-06</div>
<div class="t" style="left:766.42px;width:200px;text-align:center;top:432px;font-size:6.9px;color:#e2e2e2;font-weight:normal;">07:30:00</div>
<div class="t" style="left:809.23px;width:200px;text-align:center;top:423px;font-size:6.9px;color:#e2e2e2;font-weight:normal;">2025-12-06</div>
<div class="t" style="left:809.23px;width:200px;text-align:center;top:432px;font-size:6.9px;color:#e2e2e2;font-weight:normal;">07:37:00</div>
<div class="t" style="left:852.03px;width:200px;text-align:center;top:423px;font-size:6.9px;color:#e2e2e2;font-weight:normal;">2025-12-06</div>
<div class="t" style="left:852.03px;width:200px;text-align:center;top:432px;font-size:6.9px;color:#e2e2e2;font-weight:normal;">07:44:00</div>
<div class="t" style="left:894.84px;width:200px;text-align:center;top:423px;font-size:6.9px;color:#e2e2e2;font-weight:normal;">2025-12-06</div>
<div class="t" style="left:894.84px;width:200px;text-align:center;top:432px;font-size:6.9px;color:#e2e2e2;font-weight:normal;">07:51:00</div>
<div class="t" style="left:-20px;top:-4px;width:40px;text-align:center;font-size:8.2px;line-height:8px;color:#e2e2e2;font-weight:normal;-webkit-text-stroke:0.2px currentColor;transform:rotate(-90deg);"></div>
<div class="r" style="left:0px;top:463px;width:1024px;height:2px;background:#121212;"></div>
<div class="r" style="left:0px;top:465px;width:1024px;height:25px;background:#262626;"></div>
<div class="r" style="left:8.2px;top:468.8px;width:24.8px;height:12.199999999999989px;background:#0a78d6;"></div>
<div class="t" style="left:12.00px;top:473px;font-size:6.65px;color:#ffffff;font-weight:normal;">Tasks</div>
<div class="t" style="left:42.90px;top:473px;font-size:6.9px;color:#e8e8e8;font-weight:normal;">Cluster log</div>
<div class="r" style="left:2.5px;top:484.3px;width:1021.5px;height:3.6999999999999886px;background:#2c2c2c;"></div>
<div class="r" style="left:2.5px;top:484.3px;width:79.8px;height:3.6999999999999886px;background:#1d3a55;"></div>
<div class="r" style="left:0px;top:488px;width:1024px;height:2px;background:#1e1e1e;"></div>
<div class="r" style="left:162.3px;top:484.3px;width:1.0px;height:3.6999999999999886px;background:#3a3a3a;"></div>
<div class="r" style="left:216px;top:484.3px;width:1px;height:3.6999999999999886px;background:#3a3a3a;"></div>
<div class="r" style="left:296px;top:484.3px;width:1px;height:3.6999999999999886px;background:#3a3a3a;"></div>
<div class="r" style="left:774.5px;top:484.3px;width:1.0px;height:3.6999999999999886px;background:#3a3a3a;"></div>
<div class="r" style="left:899px;top:484.3px;width:1px;height:3.6999999999999886px;background:#3a3a3a;"></div>
<div class="r" style="left:1005.5px;top:484.3px;width:1.0px;height:3.6999999999999886px;background:#3a3a3a;"></div>
<div class="r" style="left:500px;top:462.5px;width:25px;height:3.1000000000000227px;background:#5a5a5a;border:0.5px solid #777;"></div>
<svg class="r" style="left:510.8px;top:462.8px;" width="4" height="3" viewBox="0 0 4 3"><path d="M0.2 0.6 H3.6 L1.9 2.4 Z" fill="#111"/></svg>
</body></html>
